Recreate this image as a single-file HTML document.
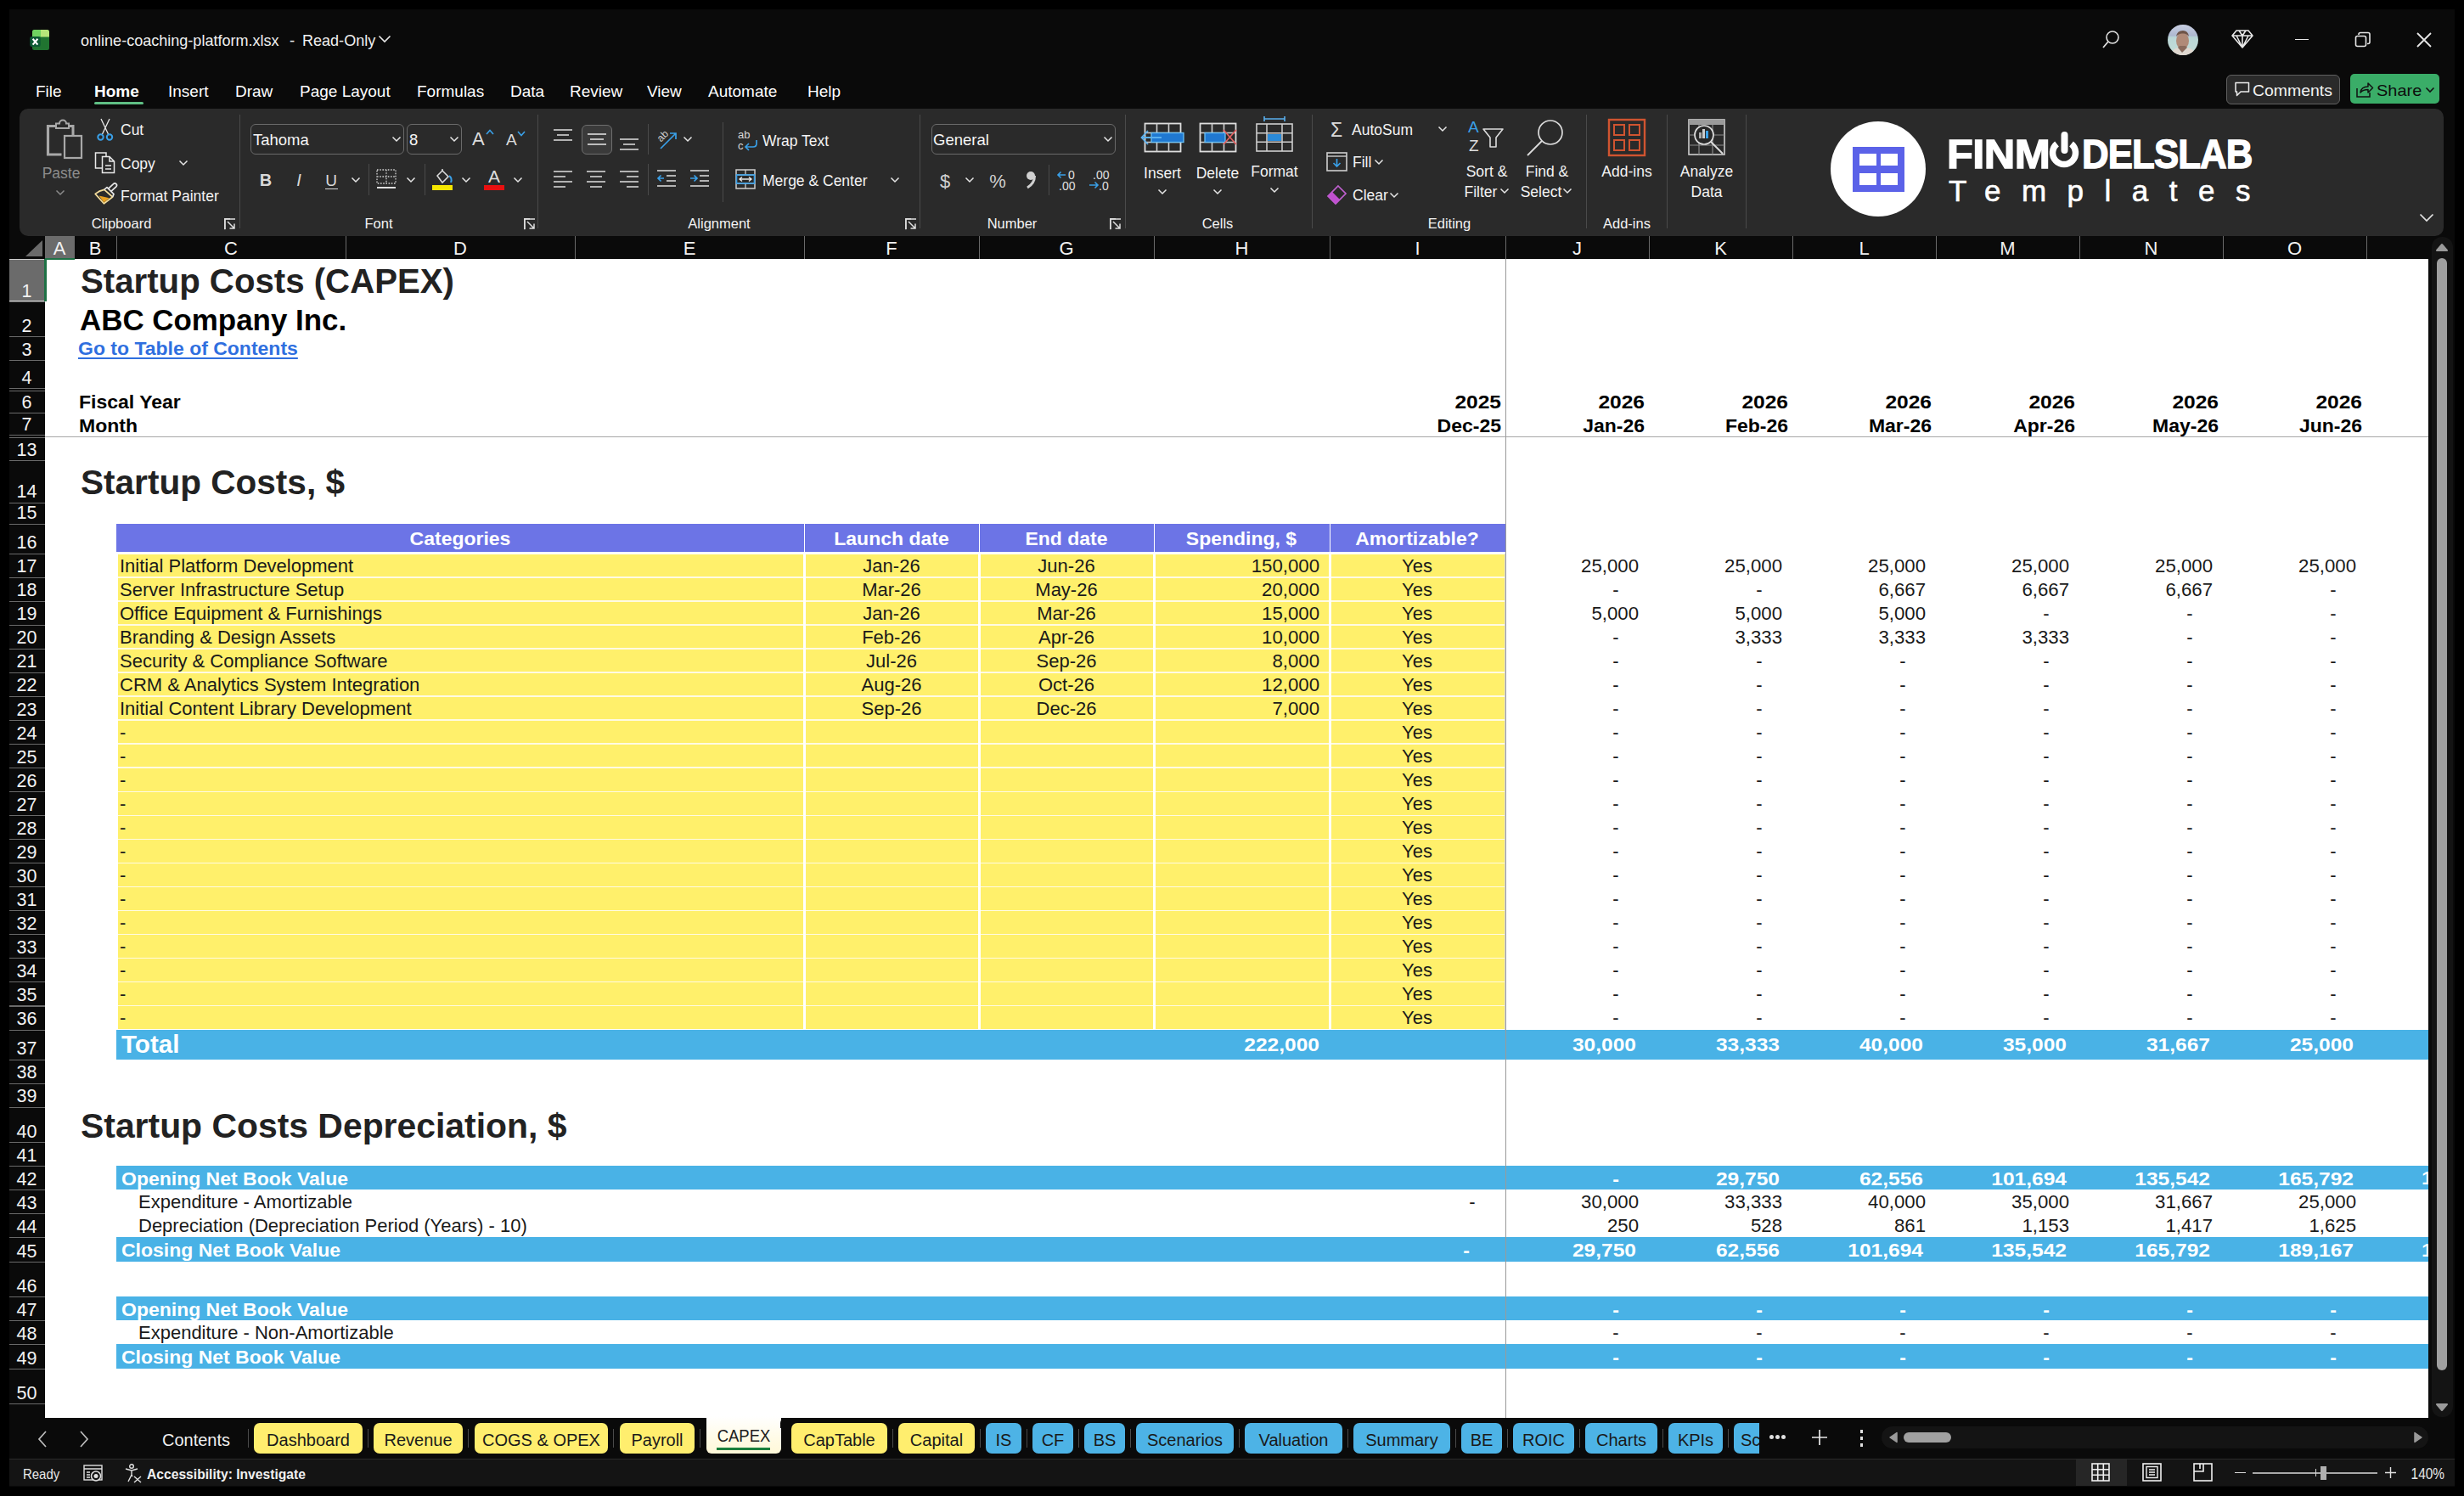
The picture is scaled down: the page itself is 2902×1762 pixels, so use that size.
<!DOCTYPE html>
<html><head><meta charset="utf-8"><title>online-coaching-platform.xlsx</title>
<style>
html,body{margin:0;padding:0;width:2902px;height:1762px;overflow:hidden;background:#000;}
body{position:relative;font-family:"Liberation Sans", sans-serif;}
.r{position:absolute;box-sizing:border-box;}
.t{position:absolute;white-space:nowrap;line-height:1;font-family:"Liberation Sans", sans-serif;}
svg.r{overflow:visible;}
</style></head><body>
<div class="r" style="left:0.00px;top:0.00px;width:2902.00px;height:1762.00px;background:#000;"></div>
<div class="r" style="left:11.00px;top:11.00px;width:2880.00px;height:1740.00px;background:#0a0a0a;"></div>
<svg class="r" style="left:34.0px;top:34.0px;" width="26" height="26" viewBox="0 0 26 26" fill="none">
<defs><clipPath id="xlc"><rect x="4" y="1" width="20" height="24" rx="2.5"/></clipPath></defs>
<g clip-path="url(#xlc)"><rect x="4" y="1" width="20" height="24" fill="#207430"/>
<rect x="4" y="1" width="10" height="8.5" fill="#6fd460"/><rect x="14" y="1" width="10" height="8.5" fill="#b6e67a"/></g>
<rect x="1.3" y="9" width="12.4" height="12" rx="2" fill="#0c5a33"/>
<path d="M4.6 11.8 L10.4 18.6 M10.4 11.8 L4.6 18.6" stroke="#fff" stroke-width="2.1"/>
</svg>
<div class="t" style="left:95.0px;top:39.00px;font-size:18.50px;font-weight:400;color:#f0f0f0;transform:scaleX(0.9750);transform-origin:left;">online-coaching-platform.xlsx</div>
<div class="t" style="left:-256.0px;top:39.00px;width:1200px;text-align:center;font-size:18.50px;font-weight:400;color:#f0f0f0;">-</div>
<div class="t" style="left:356.0px;top:39.00px;font-size:18.50px;font-weight:400;color:#f0f0f0;transform:scaleX(0.9750);transform-origin:left;">Read-Only</div>
<svg class="r" style="left:445.0px;top:41.0px;" width="16" height="10" viewBox="0 0 16 10" fill="none"><path d="M1.5 1.5 L8 8 L14.5 1.5" stroke="#e8e8e8" stroke-width="1.6"/></svg>
<svg class="r" style="left:2475.0px;top:35.0px;" width="22" height="24" viewBox="0 0 22 24" fill="none"><circle cx="13" cy="9" r="7" stroke="#e0e0e0" stroke-width="1.6"/><path d="M8 14 L2 21" stroke="#e0e0e0" stroke-width="1.8"/></svg>
<svg class="r" style="left:2553.0px;top:29.0px;" width="36" height="36" viewBox="0 0 36 36" fill="none"><defs><clipPath id="av"><circle cx="18" cy="18" r="18"/></clipPath>
<linearGradient id="avbg" x1="0" y1="0" x2="0" y2="1"><stop offset="0" stop-color="#c9cfe2"/><stop offset="0.35" stop-color="#aeb8d0"/><stop offset="0.42" stop-color="#b9d6d6"/><stop offset="1" stop-color="#c4ddd8"/></linearGradient></defs>
<g clip-path="url(#av)"><rect width="36" height="36" fill="url(#avbg)"/>
<ellipse cx="17.5" cy="19" rx="7.5" ry="10" fill="#b08a78"/><path d="M10 14 Q11 7 18 7 Q24 7 25 14 Q22 10 18 10.5 Q13 10 10 14Z" fill="#6e5448"/>
<path d="M3 37 Q6 28 12 27 L17 33 L23 27 Q31 28 34 37Z" fill="#e0d8d0"/><path d="M12 27 L17 33 L23 27 L21 25 H14Z" fill="#8a6a5c"/></g></svg>
<svg class="r" style="left:2628.0px;top:34.0px;" width="26" height="24" viewBox="0 0 26 24" fill="none"><path d="M6 2 H20 L25 8 L13 22 L1 8 Z M1 8 H25 M9 2 L13 8 L17 2 M13 8 V22 M6 8 L13 22 M20 8 L13 22" stroke="#e8e8e8" stroke-width="1.6" stroke-linejoin="round"/></svg>
<div class="r" style="left:2703.00px;top:45.50px;width:16.00px;height:1.50px;background:#e8e8e8;"></div>
<svg class="r" style="left:2773.0px;top:37.0px;" width="20" height="20" viewBox="0 0 20 20" fill="none"><rect x="1.5" y="5.5" width="12" height="12" rx="2" stroke="#e8e8e8" stroke-width="1.6"/><path d="M5 4 V3.5 A2 2 0 0 1 7 1.5 H16 A2 2 0 0 1 18 3.5 V12.5 A2 2 0 0 1 16 14.5 H15" stroke="#e8e8e8" stroke-width="1.6"/></svg>
<svg class="r" style="left:2845.0px;top:37.0px;" width="20" height="20" viewBox="0 0 20 20" fill="none"><path d="M2 2 L18 18 M18 2 L2 18" stroke="#e8e8e8" stroke-width="1.8"/></svg>
<div class="t" style="left:42.0px;top:98.00px;font-size:19.00px;font-weight:400;color:#ffffff;">File</div>
<div class="t" style="left:111.0px;top:98.00px;font-size:19.00px;font-weight:700;color:#ffffff;">Home</div>
<div class="t" style="left:198.0px;top:98.00px;font-size:19.00px;font-weight:400;color:#ffffff;">Insert</div>
<div class="t" style="left:277.0px;top:98.00px;font-size:19.00px;font-weight:400;color:#ffffff;">Draw</div>
<div class="t" style="left:353.0px;top:98.00px;font-size:19.00px;font-weight:400;color:#ffffff;">Page Layout</div>
<div class="t" style="left:491.0px;top:98.00px;font-size:19.00px;font-weight:400;color:#ffffff;">Formulas</div>
<div class="t" style="left:601.0px;top:98.00px;font-size:19.00px;font-weight:400;color:#ffffff;">Data</div>
<div class="t" style="left:671.0px;top:98.00px;font-size:19.00px;font-weight:400;color:#ffffff;">Review</div>
<div class="t" style="left:762.0px;top:98.00px;font-size:19.00px;font-weight:400;color:#ffffff;">View</div>
<div class="t" style="left:834.0px;top:98.00px;font-size:19.00px;font-weight:400;color:#ffffff;">Automate</div>
<div class="t" style="left:951.0px;top:98.00px;font-size:19.00px;font-weight:400;color:#ffffff;">Help</div>
<div class="r" style="left:111px;top:119.5px;width:58px;height:3.5px;border-radius:2px;background:#5fbf84"></div>
<div class="r" style="left:2621.5px;top:87.5px;width:134px;height:35px;border:1.3px solid #606060;border-radius:6px;background:#2a2a2a;box-sizing:border-box"></div>
<svg class="r" style="left:2631.0px;top:96.0px;" width="20" height="19" viewBox="0 0 20 19" fill="none"><path d="M2 1.5 H17.5 V12 H8 L3.5 16.5 V12 H2 Z" stroke="#eee" stroke-width="1.5" stroke-linejoin="round"/></svg>
<div class="t" style="left:2653.0px;top:98.00px;font-size:18.50px;font-weight:400;color:#f2f2f2;transform:scaleX(1.0500);transform-origin:left;">Comments</div>
<div class="r" style="left:2768px;top:87px;width:105px;height:35px;border-radius:5px;background:#3aad68"></div>
<svg class="r" style="left:2774.0px;top:96.0px;" width="22" height="20" viewBox="0 0 22 20" fill="none"><path d="M2 8 V18 H17 V13" stroke="#111" stroke-width="1.5"/><path d="M6 13 Q7 6 15 6 V2 L20.5 7.5 L15 13 V9.5 Q9 9.5 6 13Z" stroke="#111" stroke-width="1.5" stroke-linejoin="round"/></svg>
<div class="t" style="left:2799.0px;top:97.00px;font-size:19.00px;font-weight:400;color:#0d0d0d;transform:scaleX(1.0500);transform-origin:left;">Share</div>
<svg class="r" style="left:2856.0px;top:102.0px;" width="12" height="8" viewBox="0 0 12 8" fill="none"><path d="M1.5 1.5 L6 6 L10.5 1.5" stroke="#111" stroke-width="1.6"/></svg>
<div class="r" style="left:23px;top:128px;width:2855px;height:149.5px;border-radius:10px;background:#2a2a2a"></div>
<svg class="r" style="left:53.0px;top:139.0px;" width="46" height="49" viewBox="0 0 46 49" fill="none">
<path d="M4 9.5 H12 M28 9.5 H33 V21" stroke="#a8a8a8" stroke-width="3" fill="none"/>
<path d="M3.5 8 V43 H19.5" stroke="#a8a8a8" stroke-width="3.2" fill="none"/>
<path d="M13 6.5 H17 A4 4 0 0 1 25 6.5 H28 V12 H13 Z" stroke="#a8a8a8" stroke-width="2" fill="none"/>
<rect x="23" y="21" width="20" height="26" stroke="#a8a8a8" stroke-width="2.2" fill="none"/>
</svg>
<div class="t" style="left:-528.0px;top:196.00px;width:1200px;text-align:center;font-size:17.50px;font-weight:400;color:#8c8c8c;">Paste</div>
<svg class="r" style="left:65.0px;top:223.0px;" width="12" height="8" viewBox="0 0 12 8" fill="none"><path d="M1.5 1.5 L6 6 L10.5 1.5" stroke="#8a8a8a" stroke-width="1.5"/></svg>
<svg class="r" style="left:113.0px;top:139.0px;" width="22" height="28" viewBox="0 0 22 28" fill="none"><path d="M6 1 L15 20 M16 1 L7 20" stroke="#e8e8e8" stroke-width="1.3"/>
<circle cx="5.5" cy="22.5" r="3.2" stroke="#3aa0e8" stroke-width="2" fill="none"/><circle cx="16" cy="22.5" r="3.2" stroke="#3aa0e8" stroke-width="2" fill="none"/></svg>
<div class="t" style="left:142.0px;top:145.00px;font-size:17.50px;font-weight:400;color:#f3f3f3;">Cut</div>
<svg class="r" style="left:111.0px;top:178.0px;" width="26" height="27" viewBox="0 0 26 27" fill="none"><path d="M14 6 V2 H1.5 V20 H9" stroke="#e8e8e8" stroke-width="1.5" fill="none"/>
<path d="M9.5 6.5 H18 L23.5 12 V25.5 H9.5 Z M18 6.5 V12 H23.5" stroke="#e8e8e8" stroke-width="1.5" fill="none"/>
<path d="M13 17 H20 M13 21 H20" stroke="#e8e8e8" stroke-width="1.4"/></svg>
<div class="t" style="left:142.0px;top:185.00px;font-size:17.50px;font-weight:400;color:#f3f3f3;">Copy</div>
<svg class="r" style="left:210.0px;top:188.0px;" width="12" height="8" viewBox="0 0 12 8" fill="none"><path d="M1.5 1.5 L6 6 L10.5 1.5" stroke="#e6e6e6" stroke-width="1.5"/></svg>
<svg class="r" style="left:105.0px;top:210.0px;" width="36" height="36" viewBox="0 0 36 36" fill="none"><path d="M7.2 18.4 Q12 14.5 17.8 13.4 L27.6 22 L17.4 29.8 Z" stroke="#f3dc9a" stroke-width="1.7" fill="none" stroke-linejoin="round"/>
<path d="M11.5 20.5 L23.8 23.2 L17.4 28.4 Z" fill="#e8a020"/>
<path d="M17.8 13.4 L21 10.6 L29 18.6 L27.6 22" stroke="#e6e6e6" stroke-width="1.7" fill="none" stroke-linejoin="round"/>
<path d="M22.6 12.2 L28.6 6.6 A2.2 2.2 0 0 1 31.8 9.8 L25.8 15.4" stroke="#e6e6e6" stroke-width="1.7" fill="none"/></svg>
<div class="t" style="left:142.0px;top:223.00px;font-size:17.50px;font-weight:400;color:#f3f3f3;">Format Painter</div>
<div class="t" style="left:-457.0px;top:255.00px;width:1200px;text-align:center;font-size:16.50px;font-weight:400;color:#f3f3f3;">Clipboard</div>
<svg class="r" style="left:264.0px;top:257.0px;" width="14" height="14" viewBox="0 0 14 14" fill="none"><path d="M1 13 V1 H13" stroke="#e0e0e0" stroke-width="1.4" fill="none"/><path d="M1 1 V13 H13 V7" stroke="none"/><path d="M4 4 L12 12 M12 6.5 V12 H6.5" stroke="#e0e0e0" stroke-width="1.5"/></svg>
<svg class="r" style="left:264.0px;top:257.0px;" width="14" height="14" viewBox="0 0 14 14" fill="none"><path d="M0.8 13.2 V0.8 H7" stroke="#e0e0e0" stroke-width="1.4"/></svg>
<div class="r" style="left:282.00px;top:135.00px;width:1.20px;height:134.00px;background:#4a4a4a;"></div>
<div class="r" style="left:295px;top:146px;width:181px;height:36px;border:1.3px solid #6a6a6a;border-radius:6px;box-sizing:border-box"></div>
<div class="t" style="left:298.0px;top:156.00px;font-size:18.50px;font-weight:400;color:#f5f5f5;">Tahoma</div>
<svg class="r" style="left:461.0px;top:160.0px;" width="12" height="8" viewBox="0 0 12 8" fill="none"><path d="M1.5 1.5 L6 6 L10.5 1.5" stroke="#e6e6e6" stroke-width="1.5"/></svg>
<div class="r" style="left:479px;top:146px;width:65px;height:36px;border:1.3px solid #6a6a6a;border-radius:6px;box-sizing:border-box"></div>
<div class="t" style="left:482.0px;top:156.00px;font-size:18.50px;font-weight:400;color:#f5f5f5;">8</div>
<svg class="r" style="left:529.0px;top:160.0px;" width="12" height="8" viewBox="0 0 12 8" fill="none"><path d="M1.5 1.5 L6 6 L10.5 1.5" stroke="#e6e6e6" stroke-width="1.5"/></svg>
<div class="t" style="left:556.0px;top:153.00px;font-size:22.00px;font-weight:400;color:#dcdcdc;">A</div>
<svg class="r" style="left:572.0px;top:152.0px;" width="10" height="7" viewBox="0 0 10 7" fill="none"><path d="M1 6 L5 1.5 L9 6" stroke="#3aa0e8" stroke-width="1.6"/></svg>
<div class="t" style="left:596.0px;top:155.00px;font-size:19.00px;font-weight:400;color:#dcdcdc;">A</div>
<svg class="r" style="left:609.0px;top:154.0px;" width="10" height="7" viewBox="0 0 10 7" fill="none"><path d="M1 1 L5 5.5 L9 1" stroke="#3aa0e8" stroke-width="1.6"/></svg>
<div class="t" style="left:-287.0px;top:202.00px;width:1200px;text-align:center;font-size:20.00px;font-weight:700;color:#d8d8d8;">B</div>
<div class="t" style="left:-248.0px;top:202.00px;width:1200px;text-align:center;font-size:20.00px;font-weight:400;color:#d8d8d8;font-family:"Liberation Serif",serif;"><i>I</i></div>
<div class="t" style="left:-210.0px;top:203.00px;width:1200px;text-align:center;font-size:19.00px;font-weight:400;color:#d8d8d8;">U</div>
<div class="r" style="left:383.00px;top:221.50px;width:15.00px;height:1.50px;background:#d8d8d8;"></div>
<svg class="r" style="left:413.0px;top:208.0px;" width="12" height="8" viewBox="0 0 12 8" fill="none"><path d="M1.5 1.5 L6 6 L10.5 1.5" stroke="#e6e6e6" stroke-width="1.5"/></svg>
<div class="r" style="left:434.00px;top:193.00px;width:1.20px;height:37.00px;background:#4a4a4a;"></div>
<svg class="r" style="left:443.0px;top:199.0px;" width="24" height="24" viewBox="0 0 24 24" fill="none"><path d="M1 1 H23 V17 H1 Z M12 1 V17 M1 9 H23" stroke="#cfcfcf" stroke-width="1.3" stroke-dasharray="1.6 1.6"/><path d="M1 22 H23" stroke="#e0e0e0" stroke-width="2"/></svg>
<svg class="r" style="left:478.0px;top:208.0px;" width="12" height="8" viewBox="0 0 12 8" fill="none"><path d="M1.5 1.5 L6 6 L10.5 1.5" stroke="#e6e6e6" stroke-width="1.5"/></svg>
<div class="r" style="left:500.00px;top:193.00px;width:1.20px;height:37.00px;background:#4a4a4a;"></div>
<svg class="r" style="left:509.0px;top:198.0px;" width="26" height="20" viewBox="0 0 26 20" fill="none"><path d="M6 9 L12 3 L19 10 L12 17 Z" stroke="#dcdcdc" stroke-width="1.5" fill="none"/><path d="M12 3 V1" stroke="#dcdcdc" stroke-width="1.5"/><path d="M20 9 Q24 12 22 17" stroke="#3aa0e8" stroke-width="2"/></svg>
<div class="r" style="left:509.00px;top:218.00px;width:24.00px;height:6.00px;background:#f5e600;"></div>
<svg class="r" style="left:543.0px;top:208.0px;" width="12" height="8" viewBox="0 0 12 8" fill="none"><path d="M1.5 1.5 L6 6 L10.5 1.5" stroke="#e6e6e6" stroke-width="1.5"/></svg>
<div class="t" style="left:-18.0px;top:197.00px;width:1200px;text-align:center;font-size:21.00px;font-weight:400;color:#dcdcdc;">A</div>
<div class="r" style="left:570.00px;top:218.00px;width:24.00px;height:6.00px;background:#e81010;"></div>
<svg class="r" style="left:604.0px;top:208.0px;" width="12" height="8" viewBox="0 0 12 8" fill="none"><path d="M1.5 1.5 L6 6 L10.5 1.5" stroke="#e6e6e6" stroke-width="1.5"/></svg>
<div class="t" style="left:-154.0px;top:255.00px;width:1200px;text-align:center;font-size:16.50px;font-weight:400;color:#f3f3f3;">Font</div>
<svg class="r" style="left:617.0px;top:257.0px;" width="14" height="14" viewBox="0 0 14 14" fill="none"><path d="M1 13 V1 H13" stroke="#e0e0e0" stroke-width="1.4" fill="none"/><path d="M1 1 V13 H13 V7" stroke="none"/><path d="M4 4 L12 12 M12 6.5 V12 H6.5" stroke="#e0e0e0" stroke-width="1.5"/></svg>
<svg class="r" style="left:617.0px;top:257.0px;" width="14" height="14" viewBox="0 0 14 14" fill="none"><path d="M0.8 13.2 V0.8 H7" stroke="#e0e0e0" stroke-width="1.4"/></svg>
<div class="r" style="left:633.00px;top:135.00px;width:1.20px;height:134.00px;background:#4a4a4a;"></div>
<svg class="r" style="left:651.0px;top:151.0px;" width="26" height="20" viewBox="0 0 26 20" fill="none"><path d="M1 2 H23 M5 8 H19 M1 14 H23" stroke="#e0e0e0" stroke-width="1.6"/></svg>
<div class="r" style="left:685px;top:146.5px;width:36px;height:35px;border:1.3px solid #6e6e6e;border-radius:6px;background:#3a3a3a;box-sizing:border-box"></div>
<svg class="r" style="left:691.0px;top:155.5px;" width="24" height="20" viewBox="0 0 24 20" fill="none"><path d="M1 2 H23 M4 8 H20 M1 14 H23" stroke="#e8e8e8" stroke-width="1.6"/></svg>
<svg class="r" style="left:729.0px;top:160.5px;" width="26" height="20" viewBox="0 0 26 20" fill="none"><path d="M1 3 H23 M5 9 H19 M1 15 H23" stroke="#e0e0e0" stroke-width="1.6"/></svg>
<div class="r" style="left:763.00px;top:146.00px;width:1.20px;height:36.00px;background:#4a4a4a;"></div>
<svg class="r" style="left:772.0px;top:150.0px;" width="28" height="28" viewBox="0 0 28 28" fill="none"><text x="3" y="15" font-family="Liberation Sans" font-size="12" fill="#d0d0d0" transform="rotate(-45 8 12)">ab</text><path d="M6 25 L24 7 M17 7 H24 V14" stroke="#3aa0e8" stroke-width="1.7"/></svg>
<svg class="r" style="left:804.0px;top:160.0px;" width="12" height="8" viewBox="0 0 12 8" fill="none"><path d="M1.5 1.5 L6 6 L10.5 1.5" stroke="#e6e6e6" stroke-width="1.5"/></svg>
<div class="r" style="left:851.00px;top:144.00px;width:1.20px;height:94.00px;background:#4a4a4a;"></div>
<svg class="r" style="left:868.0px;top:151.0px;" width="26" height="28" viewBox="0 0 26 28" fill="none"><text x="1" y="12" font-family="Liberation Sans" font-size="13" fill="#d8d8d8">ab</text><text x="1" y="25" font-family="Liberation Sans" font-size="13" fill="#d8d8d8">c</text><path d="M23 14 V18 Q23 22 19 22 H11 M14 18 L10 22 L14 26" stroke="#3aa0e8" stroke-width="1.7" fill="none"/></svg>
<div class="t" style="left:898.0px;top:158.00px;font-size:17.50px;font-weight:400;color:#f3f3f3;">Wrap Text</div>
<svg class="r" style="left:651.0px;top:199.0px;" width="26" height="26" viewBox="0 0 26 26" fill="none"><path d="M1 3 H23 M1 9 H15 M1 15 H23 M1 21 H15" stroke="#e0e0e0" stroke-width="1.6"/></svg>
<svg class="r" style="left:690.0px;top:199.0px;" width="26" height="26" viewBox="0 0 26 26" fill="none"><path d="M1 3 H23 M5 9 H19 M1 15 H23 M5 21 H19" stroke="#e0e0e0" stroke-width="1.6"/></svg>
<svg class="r" style="left:729.0px;top:199.0px;" width="26" height="26" viewBox="0 0 26 26" fill="none"><path d="M1 3 H23 M9 9 H23 M1 15 H23 M9 21 H23" stroke="#e0e0e0" stroke-width="1.6"/></svg>
<div class="r" style="left:763.00px;top:193.00px;width:1.20px;height:37.00px;background:#4a4a4a;"></div>
<svg class="r" style="left:773.0px;top:198.0px;" width="26" height="26" viewBox="0 0 26 26" fill="none"><path d="M1 3 H23 M12 9 H23 M12 15 H23 M1 21 H23" stroke="#e0e0e0" stroke-width="1.6"/><path d="M9 12 H2 M5.5 8.5 L2 12 L5.5 15.5" stroke="#3aa0e8" stroke-width="1.7" fill="none"/></svg>
<svg class="r" style="left:812.0px;top:198.0px;" width="26" height="26" viewBox="0 0 26 26" fill="none"><path d="M1 3 H23 M12 9 H23 M12 15 H23 M1 21 H23" stroke="#e0e0e0" stroke-width="1.6"/><path d="M1 12 H9 M5.5 8.5 L9 12 L5.5 15.5" stroke="#3aa0e8" stroke-width="1.7" fill="none"/></svg>
<svg class="r" style="left:866.0px;top:199.0px;" width="25" height="25" viewBox="0 0 25 25" fill="none"><rect x="1" y="1" width="22" height="22" stroke="#cfcfcf" stroke-width="1.5" fill="none"/><path d="M1 7 H23 M1 17 H23 M12 1 V7 M12 17 V23" stroke="#cfcfcf" stroke-width="1.3"/><rect x="1.5" y="7" width="21" height="10" fill="none" stroke="#3aa0e8" stroke-width="1.6"/><path d="M5 12 H19 M8 9.5 L5 12 L8 14.5 M16 9.5 L19 12 L16 14.5" stroke="#e8e8e8" stroke-width="1.4" fill="none"/></svg>
<div class="t" style="left:898.0px;top:205.00px;font-size:17.50px;font-weight:400;color:#f3f3f3;">Merge &amp; Center</div>
<svg class="r" style="left:1048.0px;top:208.0px;" width="12" height="8" viewBox="0 0 12 8" fill="none"><path d="M1.5 1.5 L6 6 L10.5 1.5" stroke="#e6e6e6" stroke-width="1.5"/></svg>
<div class="t" style="left:247.0px;top:255.00px;width:1200px;text-align:center;font-size:16.50px;font-weight:400;color:#f3f3f3;">Alignment</div>
<svg class="r" style="left:1066.0px;top:257.0px;" width="14" height="14" viewBox="0 0 14 14" fill="none"><path d="M1 13 V1 H13" stroke="#e0e0e0" stroke-width="1.4" fill="none"/><path d="M1 1 V13 H13 V7" stroke="none"/><path d="M4 4 L12 12 M12 6.5 V12 H6.5" stroke="#e0e0e0" stroke-width="1.5"/></svg>
<svg class="r" style="left:1066.0px;top:257.0px;" width="14" height="14" viewBox="0 0 14 14" fill="none"><path d="M0.8 13.2 V0.8 H7" stroke="#e0e0e0" stroke-width="1.4"/></svg>
<div class="r" style="left:1083.00px;top:135.00px;width:1.20px;height:134.00px;background:#4a4a4a;"></div>
<div class="r" style="left:1097px;top:146px;width:217px;height:36px;border:1.3px solid #6a6a6a;border-radius:6px;box-sizing:border-box"></div>
<div class="t" style="left:1099.0px;top:156.00px;font-size:18.50px;font-weight:400;color:#f5f5f5;">General</div>
<svg class="r" style="left:1299.0px;top:160.0px;" width="12" height="8" viewBox="0 0 12 8" fill="none"><path d="M1.5 1.5 L6 6 L10.5 1.5" stroke="#e6e6e6" stroke-width="1.5"/></svg>
<div class="t" style="left:513.0px;top:203.00px;width:1200px;text-align:center;font-size:22.00px;font-weight:400;color:#d0d0d0;">$</div>
<svg class="r" style="left:1136.0px;top:208.0px;" width="12" height="8" viewBox="0 0 12 8" fill="none"><path d="M1.5 1.5 L6 6 L10.5 1.5" stroke="#e6e6e6" stroke-width="1.5"/></svg>
<div class="t" style="left:575.0px;top:203.00px;width:1200px;text-align:center;font-size:22.00px;font-weight:400;color:#d0d0d0;">%</div>
<svg class="r" style="left:1207.0px;top:201.0px;" width="14" height="22" viewBox="0 0 14 22" fill="none"><circle cx="7" cy="6" r="5" fill="#d0d0d0"/><path d="M11.5 6 Q11.5 15 3 20" stroke="#d0d0d0" stroke-width="3" fill="none"/></svg>
<div class="r" style="left:1235.00px;top:194.00px;width:1.20px;height:36.00px;background:#4a4a4a;"></div>
<svg class="r" style="left:1244.0px;top:198.0px;" width="28" height="28" viewBox="0 0 28 28" fill="none"><path d="M11 8 H2 M5.5 4.5 L2 8 L5.5 11.5" stroke="#3aa0e8" stroke-width="1.6" fill="none"/><text x="14" y="13" font-family="Liberation Sans" font-size="14" fill="#e0e0e0">0</text><text x="3" y="26" font-family="Liberation Sans" font-size="14" fill="#e0e0e0">.00</text></svg>
<svg class="r" style="left:1282.0px;top:198.0px;" width="30" height="28" viewBox="0 0 30 28" fill="none"><text x="5" y="13" font-family="Liberation Sans" font-size="14" fill="#e0e0e0">.00</text><path d="M1 20 H11 M7.5 16.5 L11 20 L7.5 23.5" stroke="#3aa0e8" stroke-width="1.6" fill="none"/><text x="12" y="26" font-family="Liberation Sans" font-size="14" fill="#e0e0e0">.0</text></svg>
<div class="t" style="left:592.0px;top:255.00px;width:1200px;text-align:center;font-size:16.50px;font-weight:400;color:#f3f3f3;">Number</div>
<svg class="r" style="left:1307.0px;top:257.0px;" width="14" height="14" viewBox="0 0 14 14" fill="none"><path d="M1 13 V1 H13" stroke="#e0e0e0" stroke-width="1.4" fill="none"/><path d="M1 1 V13 H13 V7" stroke="none"/><path d="M4 4 L12 12 M12 6.5 V12 H6.5" stroke="#e0e0e0" stroke-width="1.5"/></svg>
<svg class="r" style="left:1307.0px;top:257.0px;" width="14" height="14" viewBox="0 0 14 14" fill="none"><path d="M0.8 13.2 V0.8 H7" stroke="#e0e0e0" stroke-width="1.4"/></svg>
<div class="r" style="left:1325.00px;top:135.00px;width:1.20px;height:134.00px;background:#4a4a4a;"></div>
<svg class="r" style="left:1342.0px;top:132.0px;" width="50" height="48" viewBox="0 0 50 48" fill="none"><rect x="6.5" y="13.5" width="42" height="33" stroke="#dedede" stroke-width="1.8" fill="none"/><path d="M20.5 13.5 V46.5 M34.5 13.5 V46.5 M6.5 24.5 H48.5 M6.5 35.5 H48.5" stroke="#cfcfcf" stroke-width="1.6"/><rect x="14" y="24.5" width="38" height="11" fill="#1f78d1" stroke="#6cc0f5" stroke-width="1.3"/><path d="M26 30 H3 M10 22 L2.5 30 L10 38" stroke="#5ab0ee" stroke-width="1.8" fill="none"/></svg>
<div class="t" style="left:769.0px;top:196.00px;width:1200px;text-align:center;font-size:17.50px;font-weight:400;color:#f3f3f3;">Insert</div>
<svg class="r" style="left:1363.0px;top:222.0px;" width="12" height="8" viewBox="0 0 12 8" fill="none"><path d="M1.5 1.5 L6 6 L10.5 1.5" stroke="#e6e6e6" stroke-width="1.5"/></svg>
<svg class="r" style="left:1411.0px;top:132.0px;" width="50" height="48" viewBox="0 0 50 48" fill="none"><rect x="2.5" y="13.5" width="42" height="33" stroke="#dedede" stroke-width="1.8" fill="none"/><path d="M16.5 13.5 V46.5 M30.5 13.5 V46.5 M2.5 24.5 H44.5 M2.5 35.5 H44.5" stroke="#cfcfcf" stroke-width="1.6"/><rect x="8" y="24.5" width="24" height="11" fill="#1f78d1" stroke="#6cc0f5" stroke-width="1.3"/><path d="M30 21 L45 38 M45 21 L30 38" stroke="#e06060" stroke-width="1.8"/></svg>
<div class="t" style="left:834.0px;top:196.00px;width:1200px;text-align:center;font-size:17.50px;font-weight:400;color:#f3f3f3;">Delete</div>
<svg class="r" style="left:1428.0px;top:222.0px;" width="12" height="8" viewBox="0 0 12 8" fill="none"><path d="M1.5 1.5 L6 6 L10.5 1.5" stroke="#e6e6e6" stroke-width="1.5"/></svg>
<svg class="r" style="left:1478.0px;top:132.0px;" width="46" height="48" viewBox="0 0 46 48" fill="none"><rect x="2" y="14" width="42" height="32" stroke="#cfcfcf" stroke-width="1.6" fill="none"/><path d="M14 14 V46 M32 14 V46 M2 24.7 H44 M2 35.3 H44" stroke="#cfcfcf" stroke-width="1.5"/><rect x="15" y="26" width="16" height="8" fill="#2a8ad8"/><path d="M11 8 H35 M11 5 V11 M35 5 V11" stroke="#5ab0ee" stroke-width="1.6"/></svg>
<div class="t" style="left:901.0px;top:194.00px;width:1200px;text-align:center;font-size:17.50px;font-weight:400;color:#f3f3f3;">Format</div>
<svg class="r" style="left:1495.0px;top:220.0px;" width="12" height="8" viewBox="0 0 12 8" fill="none"><path d="M1.5 1.5 L6 6 L10.5 1.5" stroke="#e6e6e6" stroke-width="1.5"/></svg>
<div class="t" style="left:834.0px;top:255.00px;width:1200px;text-align:center;font-size:16.50px;font-weight:400;color:#f3f3f3;">Cells</div>
<div class="r" style="left:1545.00px;top:135.00px;width:1.20px;height:134.00px;background:#4a4a4a;"></div>
<div class="t" style="left:974.0px;top:142.00px;width:1200px;text-align:center;font-size:23.00px;font-weight:400;color:#dcdcdc;">&Sigma;</div>
<div class="t" style="left:1592.0px;top:145.00px;font-size:17.50px;font-weight:400;color:#f3f3f3;">AutoSum</div>
<svg class="r" style="left:1693.0px;top:148.0px;" width="12" height="8" viewBox="0 0 12 8" fill="none"><path d="M1.5 1.5 L6 6 L10.5 1.5" stroke="#e6e6e6" stroke-width="1.5"/></svg>
<svg class="r" style="left:1562.0px;top:179.0px;" width="26" height="24" viewBox="0 0 26 24" fill="none"><rect x="1" y="1" width="23" height="21" stroke="#cfcfcf" stroke-width="1.6" fill="none"/><path d="M1 5 H24" stroke="#cfcfcf" stroke-width="1.4"/><path d="M12.5 8 V17 M8.5 13 L12.5 17 L16.5 13" stroke="#3aa0e8" stroke-width="1.7" fill="none"/></svg>
<div class="t" style="left:1593.0px;top:183.00px;font-size:17.50px;font-weight:400;color:#f3f3f3;">Fill</div>
<svg class="r" style="left:1618.0px;top:187.0px;" width="12" height="8" viewBox="0 0 12 8" fill="none"><path d="M1.5 1.5 L6 6 L10.5 1.5" stroke="#e6e6e6" stroke-width="1.5"/></svg>
<svg class="r" style="left:1562.0px;top:217.0px;" width="26" height="26" viewBox="0 0 26 26" fill="none"><path d="M14 2 L23 11 L11 23 L2 14 Z" stroke="#c060d0" stroke-width="1.7" fill="none"/><path d="M2 14 L7 9 L16 18 L11 23 Z" fill="#c050d0"/></svg>
<div class="t" style="left:1593.0px;top:222.00px;font-size:17.50px;font-weight:400;color:#f3f3f3;">Clear</div>
<svg class="r" style="left:1636.0px;top:226.0px;" width="12" height="8" viewBox="0 0 12 8" fill="none"><path d="M1.5 1.5 L6 6 L10.5 1.5" stroke="#e6e6e6" stroke-width="1.5"/></svg>
<svg class="r" style="left:1728.0px;top:140.0px;" width="46" height="44" viewBox="0 0 46 44" fill="none"><text x="1" y="16" font-family="Liberation Sans" font-size="19" fill="#3aa0e8">A</text><text x="2" y="38" font-family="Liberation Sans" font-size="19" fill="#dcdcdc">Z</text><path d="M19 12 H42 L34 22 V33 H27 V22 Z" stroke="#dcdcdc" stroke-width="1.6" fill="none" stroke-linejoin="round"/></svg>
<div class="t" style="left:1151.0px;top:194.00px;width:1200px;text-align:center;font-size:17.50px;font-weight:400;color:#f3f3f3;">Sort &amp;</div>
<div class="t" style="left:1144.0px;top:218.00px;width:1200px;text-align:center;font-size:17.50px;font-weight:400;color:#f3f3f3;">Filter</div>
<svg class="r" style="left:1766.0px;top:221.0px;" width="12" height="8" viewBox="0 0 12 8" fill="none"><path d="M1.5 1.5 L6 6 L10.5 1.5" stroke="#e6e6e6" stroke-width="1.5"/></svg>
<svg class="r" style="left:1797.0px;top:140.0px;" width="47" height="45" viewBox="0 0 47 45" fill="none"><circle cx="29" cy="16" r="14" stroke="#dcdcdc" stroke-width="1.7" fill="none"/><path d="M19 26 L2 43" stroke="#dcdcdc" stroke-width="1.8"/></svg>
<div class="t" style="left:1222.0px;top:194.00px;width:1200px;text-align:center;font-size:17.50px;font-weight:400;color:#f3f3f3;">Find &amp;</div>
<div class="t" style="left:1215.0px;top:218.00px;width:1200px;text-align:center;font-size:17.50px;font-weight:400;color:#f3f3f3;">Select</div>
<svg class="r" style="left:1840.0px;top:221.0px;" width="12" height="8" viewBox="0 0 12 8" fill="none"><path d="M1.5 1.5 L6 6 L10.5 1.5" stroke="#e6e6e6" stroke-width="1.5"/></svg>
<div class="t" style="left:1107.0px;top:255.00px;width:1200px;text-align:center;font-size:16.50px;font-weight:400;color:#f3f3f3;">Editing</div>
<div class="r" style="left:1868.00px;top:135.00px;width:1.20px;height:134.00px;background:#4a4a4a;"></div>
<svg class="r" style="left:1893.0px;top:139.0px;" width="46" height="46" viewBox="0 0 46 46" fill="none"><rect x="2" y="2" width="42" height="42" stroke="#d05430" stroke-width="2.4" fill="none"/><rect x="8" y="8" width="12" height="12" stroke="#d05430" stroke-width="2" fill="none"/><rect x="26" y="8" width="12" height="12" stroke="#d05430" stroke-width="2" fill="none"/><rect x="8" y="26" width="12" height="12" stroke="#d05430" stroke-width="2" fill="none"/><rect x="26" y="26" width="12" height="12" stroke="#d05430" stroke-width="2" fill="none"/></svg>
<div class="t" style="left:1316.0px;top:194.00px;width:1200px;text-align:center;font-size:17.50px;font-weight:400;color:#f3f3f3;">Add-ins</div>
<div class="t" style="left:1316.0px;top:255.00px;width:1200px;text-align:center;font-size:16.50px;font-weight:400;color:#f3f3f3;">Add-ins</div>
<div class="r" style="left:1963.00px;top:135.00px;width:1.20px;height:134.00px;background:#4a4a4a;"></div>
<svg class="r" style="left:1987.0px;top:139.0px;" width="46" height="46" viewBox="0 0 46 46" fill="none"><rect x="2" y="2" width="42" height="41" stroke="#cfcfcf" stroke-width="1.6" fill="none"/><rect x="2" y="2" width="42" height="6" fill="#9a9a9a"/><path d="M2 20 H44 M2 32 H44 M14 8 V43 M30 8 V43" stroke="#8a8a8a" stroke-width="1.2"/><circle cx="20" cy="20" r="11" fill="#282828" stroke="#dcdcdc" stroke-width="1.7"/><rect x="14" y="17" width="3" height="7" fill="#aaa"/><rect x="18" y="13" width="3" height="11" fill="#ccc"/><rect x="22" y="15" width="3" height="9" fill="#3aa0e8"/><path d="M28 28 L42 42" stroke="#dcdcdc" stroke-width="2"/></svg>
<div class="t" style="left:1410.0px;top:194.00px;width:1200px;text-align:center;font-size:17.50px;font-weight:400;color:#f3f3f3;">Analyze</div>
<div class="t" style="left:1410.0px;top:218.00px;width:1200px;text-align:center;font-size:17.50px;font-weight:400;color:#f3f3f3;">Data</div>
<div class="r" style="left:2056.00px;top:135.00px;width:1.20px;height:134.00px;background:#4a4a4a;"></div>
<div class="r" style="left:2156px;top:143px;width:112px;height:112px;border-radius:50%;background:#fff"></div>
<div class="r" style="left:2182.00px;top:173.00px;width:61.00px;height:53.00px;background:#5b62e8;"></div>
<div class="r" style="left:2190.00px;top:181.00px;width:20.00px;height:14.00px;background:#fff;"></div>
<div class="r" style="left:2215.00px;top:181.00px;width:20.00px;height:14.00px;background:#fff;"></div>
<div class="r" style="left:2190.00px;top:204.00px;width:20.00px;height:14.00px;background:#fff;"></div>
<div class="r" style="left:2215.00px;top:204.00px;width:20.00px;height:14.00px;background:#fff;"></div>
<div class="t" style="left:2293.0px;top:157.00px;font-size:49.00px;font-weight:700;color:#ffffff;transform:scaleX(1.0300);transform-origin:left;letter-spacing:-0.5px;-webkit-text-stroke:1.4px #fff;">FINM</div>
<svg class="r" style="left:2411.0px;top:155.0px;" width="40" height="48" viewBox="0 0 40 48" fill="none"><path d="M11.5 14.5 A13.5 13.5 0 1 0 28.5 14.5" stroke="#fff" stroke-width="7.5" fill="none"/><path d="M20.5 4 V22" stroke="#fff" stroke-width="8" stroke-linecap="round"/></svg>
<div class="t" style="left:2452.0px;top:157.00px;font-size:49.00px;font-weight:700;color:#ffffff;transform:scaleX(0.8940);transform-origin:left;letter-spacing:-1px;-webkit-text-stroke:1.4px #fff;">DELSLAB</div>
<div class="t" style="left:2295.0px;top:207.00px;font-size:35.00px;font-weight:400;color:#ffffff;letter-spacing:24.5px;-webkit-text-stroke:0.6px #fff;">Templates</div>
<svg class="r" style="left:2849.0px;top:251.0px;" width="18" height="11" viewBox="0 0 18 11" fill="none"><path d="M1.5 1.5 L9 9 L16.5 1.5" stroke="#e0e0e0" stroke-width="1.7"/></svg>
<div class="r" style="left:53.00px;top:305.00px;width:2807.00px;height:1365.00px;background:#ffffff;"></div>
<div class="r" style="left:11.00px;top:278.00px;width:2849.00px;height:27.00px;background:#0a0a0a;"></div>
<svg class="r" style="left:28.0px;top:281.0px;" width="24" height="22" viewBox="0 0 24 22" fill="none"><path d="M22 2 V21 H2 Z" fill="#6a6a6a"/></svg>
<div class="r" style="left:53.00px;top:278.00px;width:34.00px;height:27.00px;background:#6b6b6b;"></div>
<div class="r" style="left:86.80px;top:278.00px;width:1.10px;height:27.00px;background:#6a6a6a;"></div>
<div class="t" style="left:-530.0px;top:282.00px;width:1200px;text-align:center;font-size:22.00px;font-weight:400;color:#f2f2f2;">A</div>
<div class="r" style="left:136.80px;top:278.00px;width:1.10px;height:27.00px;background:#6a6a6a;"></div>
<div class="t" style="left:-488.0px;top:282.00px;width:1200px;text-align:center;font-size:22.00px;font-weight:400;color:#f2f2f2;">B</div>
<div class="r" style="left:406.80px;top:278.00px;width:1.10px;height:27.00px;background:#6a6a6a;"></div>
<div class="t" style="left:-328.0px;top:282.00px;width:1200px;text-align:center;font-size:22.00px;font-weight:400;color:#f2f2f2;">C</div>
<div class="r" style="left:676.80px;top:278.00px;width:1.10px;height:27.00px;background:#6a6a6a;"></div>
<div class="t" style="left:-58.0px;top:282.00px;width:1200px;text-align:center;font-size:22.00px;font-weight:400;color:#f2f2f2;">D</div>
<div class="r" style="left:946.80px;top:278.00px;width:1.10px;height:27.00px;background:#6a6a6a;"></div>
<div class="t" style="left:212.0px;top:282.00px;width:1200px;text-align:center;font-size:22.00px;font-weight:400;color:#f2f2f2;">E</div>
<div class="r" style="left:1152.80px;top:278.00px;width:1.10px;height:27.00px;background:#6a6a6a;"></div>
<div class="t" style="left:450.0px;top:282.00px;width:1200px;text-align:center;font-size:22.00px;font-weight:400;color:#f2f2f2;">F</div>
<div class="r" style="left:1358.80px;top:278.00px;width:1.10px;height:27.00px;background:#6a6a6a;"></div>
<div class="t" style="left:656.0px;top:282.00px;width:1200px;text-align:center;font-size:22.00px;font-weight:400;color:#f2f2f2;">G</div>
<div class="r" style="left:1565.80px;top:278.00px;width:1.10px;height:27.00px;background:#6a6a6a;"></div>
<div class="t" style="left:862.5px;top:282.00px;width:1200px;text-align:center;font-size:22.00px;font-weight:400;color:#f2f2f2;">H</div>
<div class="r" style="left:1772.80px;top:278.00px;width:1.10px;height:27.00px;background:#6a6a6a;"></div>
<div class="t" style="left:1069.5px;top:282.00px;width:1200px;text-align:center;font-size:22.00px;font-weight:400;color:#f2f2f2;">I</div>
<div class="r" style="left:1941.80px;top:278.00px;width:1.10px;height:27.00px;background:#6a6a6a;"></div>
<div class="t" style="left:1257.5px;top:282.00px;width:1200px;text-align:center;font-size:22.00px;font-weight:400;color:#f2f2f2;">J</div>
<div class="r" style="left:2110.80px;top:278.00px;width:1.10px;height:27.00px;background:#6a6a6a;"></div>
<div class="t" style="left:1426.5px;top:282.00px;width:1200px;text-align:center;font-size:22.00px;font-weight:400;color:#f2f2f2;">K</div>
<div class="r" style="left:2279.80px;top:278.00px;width:1.10px;height:27.00px;background:#6a6a6a;"></div>
<div class="t" style="left:1595.5px;top:282.00px;width:1200px;text-align:center;font-size:22.00px;font-weight:400;color:#f2f2f2;">L</div>
<div class="r" style="left:2448.80px;top:278.00px;width:1.10px;height:27.00px;background:#6a6a6a;"></div>
<div class="t" style="left:1764.5px;top:282.00px;width:1200px;text-align:center;font-size:22.00px;font-weight:400;color:#f2f2f2;">M</div>
<div class="r" style="left:2617.80px;top:278.00px;width:1.10px;height:27.00px;background:#6a6a6a;"></div>
<div class="t" style="left:1933.5px;top:282.00px;width:1200px;text-align:center;font-size:22.00px;font-weight:400;color:#f2f2f2;">N</div>
<div class="r" style="left:2786.80px;top:278.00px;width:1.10px;height:27.00px;background:#6a6a6a;"></div>
<div class="t" style="left:2102.5px;top:282.00px;width:1200px;text-align:center;font-size:22.00px;font-weight:400;color:#f2f2f2;">O</div>
<div class="r" style="left:53.00px;top:303.50px;width:35.00px;height:2.50px;background:#1e7145;"></div>
<div class="r" style="left:11.00px;top:305.00px;width:42.00px;height:1365.00px;background:#0a0a0a;"></div>
<div class="r" style="left:11.00px;top:305.00px;width:42.00px;height:50.00px;background:#6b6b6b;"></div>
<div class="r" style="left:11.00px;top:355.00px;width:42.00px;height:1.10px;background:#6a6a6a;"></div>
<div class="t" style="left:-568.5px;top:333.00px;width:1200px;text-align:center;font-size:21.50px;font-weight:400;color:#f2f2f2;">1</div>
<div class="r" style="left:11.00px;top:396.00px;width:42.00px;height:1.10px;background:#6a6a6a;"></div>
<div class="t" style="left:-568.5px;top:374.00px;width:1200px;text-align:center;font-size:21.50px;font-weight:400;color:#f2f2f2;">2</div>
<div class="r" style="left:11.00px;top:424.00px;width:42.00px;height:1.10px;background:#6a6a6a;"></div>
<div class="t" style="left:-568.5px;top:402.00px;width:1200px;text-align:center;font-size:21.50px;font-weight:400;color:#f2f2f2;">3</div>
<div class="r" style="left:11.00px;top:457.00px;width:42.00px;height:1.10px;background:#6a6a6a;"></div>
<div class="t" style="left:-568.5px;top:435.00px;width:1200px;text-align:center;font-size:21.50px;font-weight:400;color:#f2f2f2;">4</div>
<div class="r" style="left:11.00px;top:486.00px;width:42.00px;height:1.10px;background:#6a6a6a;"></div>
<div class="t" style="left:-568.5px;top:464.00px;width:1200px;text-align:center;font-size:21.50px;font-weight:400;color:#f2f2f2;">6</div>
<div class="r" style="left:11.00px;top:512.00px;width:42.00px;height:1.10px;background:#6a6a6a;"></div>
<div class="t" style="left:-568.5px;top:490.00px;width:1200px;text-align:center;font-size:21.50px;font-weight:400;color:#f2f2f2;">7</div>
<div class="r" style="left:11.00px;top:542.00px;width:42.00px;height:1.10px;background:#6a6a6a;"></div>
<div class="t" style="left:-568.5px;top:520.00px;width:1200px;text-align:center;font-size:21.50px;font-weight:400;color:#f2f2f2;">13</div>
<div class="r" style="left:11.00px;top:591.50px;width:42.00px;height:1.10px;background:#6a6a6a;"></div>
<div class="t" style="left:-568.5px;top:569.00px;width:1200px;text-align:center;font-size:21.50px;font-weight:400;color:#f2f2f2;">14</div>
<div class="r" style="left:11.00px;top:616.50px;width:42.00px;height:1.10px;background:#6a6a6a;"></div>
<div class="t" style="left:-568.5px;top:594.00px;width:1200px;text-align:center;font-size:21.50px;font-weight:400;color:#f2f2f2;">15</div>
<div class="r" style="left:11.00px;top:651.50px;width:42.00px;height:1.10px;background:#6a6a6a;"></div>
<div class="t" style="left:-568.5px;top:629.00px;width:1200px;text-align:center;font-size:21.50px;font-weight:400;color:#f2f2f2;">16</div>
<div class="r" style="left:11.00px;top:679.55px;width:42.00px;height:1.10px;background:#6a6a6a;"></div>
<div class="t" style="left:-568.5px;top:657.00px;width:1200px;text-align:center;font-size:21.50px;font-weight:400;color:#f2f2f2;">17</div>
<div class="r" style="left:11.00px;top:707.60px;width:42.00px;height:1.10px;background:#6a6a6a;"></div>
<div class="t" style="left:-568.5px;top:685.00px;width:1200px;text-align:center;font-size:21.50px;font-weight:400;color:#f2f2f2;">18</div>
<div class="r" style="left:11.00px;top:735.65px;width:42.00px;height:1.10px;background:#6a6a6a;"></div>
<div class="t" style="left:-568.5px;top:713.00px;width:1200px;text-align:center;font-size:21.50px;font-weight:400;color:#f2f2f2;">19</div>
<div class="r" style="left:11.00px;top:763.70px;width:42.00px;height:1.10px;background:#6a6a6a;"></div>
<div class="t" style="left:-568.5px;top:741.00px;width:1200px;text-align:center;font-size:21.50px;font-weight:400;color:#f2f2f2;">20</div>
<div class="r" style="left:11.00px;top:791.75px;width:42.00px;height:1.10px;background:#6a6a6a;"></div>
<div class="t" style="left:-568.5px;top:769.00px;width:1200px;text-align:center;font-size:21.50px;font-weight:400;color:#f2f2f2;">21</div>
<div class="r" style="left:11.00px;top:819.80px;width:42.00px;height:1.10px;background:#6a6a6a;"></div>
<div class="t" style="left:-568.5px;top:797.00px;width:1200px;text-align:center;font-size:21.50px;font-weight:400;color:#f2f2f2;">22</div>
<div class="r" style="left:11.00px;top:847.85px;width:42.00px;height:1.10px;background:#6a6a6a;"></div>
<div class="t" style="left:-568.5px;top:826.00px;width:1200px;text-align:center;font-size:21.50px;font-weight:400;color:#f2f2f2;">23</div>
<div class="r" style="left:11.00px;top:875.90px;width:42.00px;height:1.10px;background:#6a6a6a;"></div>
<div class="t" style="left:-568.5px;top:854.00px;width:1200px;text-align:center;font-size:21.50px;font-weight:400;color:#f2f2f2;">24</div>
<div class="r" style="left:11.00px;top:903.95px;width:42.00px;height:1.10px;background:#6a6a6a;"></div>
<div class="t" style="left:-568.5px;top:882.00px;width:1200px;text-align:center;font-size:21.50px;font-weight:400;color:#f2f2f2;">25</div>
<div class="r" style="left:11.00px;top:932.00px;width:42.00px;height:1.10px;background:#6a6a6a;"></div>
<div class="t" style="left:-568.5px;top:910.00px;width:1200px;text-align:center;font-size:21.50px;font-weight:400;color:#f2f2f2;">26</div>
<div class="r" style="left:11.00px;top:960.05px;width:42.00px;height:1.10px;background:#6a6a6a;"></div>
<div class="t" style="left:-568.5px;top:938.00px;width:1200px;text-align:center;font-size:21.50px;font-weight:400;color:#f2f2f2;">27</div>
<div class="r" style="left:11.00px;top:988.10px;width:42.00px;height:1.10px;background:#6a6a6a;"></div>
<div class="t" style="left:-568.5px;top:966.00px;width:1200px;text-align:center;font-size:21.50px;font-weight:400;color:#f2f2f2;">28</div>
<div class="r" style="left:11.00px;top:1016.15px;width:42.00px;height:1.10px;background:#6a6a6a;"></div>
<div class="t" style="left:-568.5px;top:994.00px;width:1200px;text-align:center;font-size:21.50px;font-weight:400;color:#f2f2f2;">29</div>
<div class="r" style="left:11.00px;top:1044.20px;width:42.00px;height:1.10px;background:#6a6a6a;"></div>
<div class="t" style="left:-568.5px;top:1022.00px;width:1200px;text-align:center;font-size:21.50px;font-weight:400;color:#f2f2f2;">30</div>
<div class="r" style="left:11.00px;top:1072.25px;width:42.00px;height:1.10px;background:#6a6a6a;"></div>
<div class="t" style="left:-568.5px;top:1050.00px;width:1200px;text-align:center;font-size:21.50px;font-weight:400;color:#f2f2f2;">31</div>
<div class="r" style="left:11.00px;top:1100.30px;width:42.00px;height:1.10px;background:#6a6a6a;"></div>
<div class="t" style="left:-568.5px;top:1078.00px;width:1200px;text-align:center;font-size:21.50px;font-weight:400;color:#f2f2f2;">32</div>
<div class="r" style="left:11.00px;top:1128.35px;width:42.00px;height:1.10px;background:#6a6a6a;"></div>
<div class="t" style="left:-568.5px;top:1106.00px;width:1200px;text-align:center;font-size:21.50px;font-weight:400;color:#f2f2f2;">33</div>
<div class="r" style="left:11.00px;top:1156.40px;width:42.00px;height:1.10px;background:#6a6a6a;"></div>
<div class="t" style="left:-568.5px;top:1134.00px;width:1200px;text-align:center;font-size:21.50px;font-weight:400;color:#f2f2f2;">34</div>
<div class="r" style="left:11.00px;top:1184.45px;width:42.00px;height:1.10px;background:#6a6a6a;"></div>
<div class="t" style="left:-568.5px;top:1162.00px;width:1200px;text-align:center;font-size:21.50px;font-weight:400;color:#f2f2f2;">35</div>
<div class="r" style="left:11.00px;top:1212.50px;width:42.00px;height:1.10px;background:#6a6a6a;"></div>
<div class="t" style="left:-568.5px;top:1190.00px;width:1200px;text-align:center;font-size:21.50px;font-weight:400;color:#f2f2f2;">36</div>
<div class="r" style="left:11.00px;top:1247.50px;width:42.00px;height:1.10px;background:#6a6a6a;"></div>
<div class="t" style="left:-568.5px;top:1225.00px;width:1200px;text-align:center;font-size:21.50px;font-weight:400;color:#f2f2f2;">37</div>
<div class="r" style="left:11.00px;top:1275.50px;width:42.00px;height:1.10px;background:#6a6a6a;"></div>
<div class="t" style="left:-568.5px;top:1253.00px;width:1200px;text-align:center;font-size:21.50px;font-weight:400;color:#f2f2f2;">38</div>
<div class="r" style="left:11.00px;top:1303.50px;width:42.00px;height:1.10px;background:#6a6a6a;"></div>
<div class="t" style="left:-568.5px;top:1281.00px;width:1200px;text-align:center;font-size:21.50px;font-weight:400;color:#f2f2f2;">39</div>
<div class="r" style="left:11.00px;top:1345.30px;width:42.00px;height:1.10px;background:#6a6a6a;"></div>
<div class="t" style="left:-568.5px;top:1323.00px;width:1200px;text-align:center;font-size:21.50px;font-weight:400;color:#f2f2f2;">40</div>
<div class="r" style="left:11.00px;top:1373.40px;width:42.00px;height:1.10px;background:#6a6a6a;"></div>
<div class="t" style="left:-568.5px;top:1351.00px;width:1200px;text-align:center;font-size:21.50px;font-weight:400;color:#f2f2f2;">41</div>
<div class="r" style="left:11.00px;top:1401.20px;width:42.00px;height:1.10px;background:#6a6a6a;"></div>
<div class="t" style="left:-568.5px;top:1379.00px;width:1200px;text-align:center;font-size:21.50px;font-weight:400;color:#f2f2f2;">42</div>
<div class="r" style="left:11.00px;top:1429.00px;width:42.00px;height:1.10px;background:#6a6a6a;"></div>
<div class="t" style="left:-568.5px;top:1407.00px;width:1200px;text-align:center;font-size:21.50px;font-weight:400;color:#f2f2f2;">43</div>
<div class="r" style="left:11.00px;top:1457.00px;width:42.00px;height:1.10px;background:#6a6a6a;"></div>
<div class="t" style="left:-568.5px;top:1435.00px;width:1200px;text-align:center;font-size:21.50px;font-weight:400;color:#f2f2f2;">44</div>
<div class="r" style="left:11.00px;top:1486.00px;width:42.00px;height:1.10px;background:#6a6a6a;"></div>
<div class="t" style="left:-568.5px;top:1464.00px;width:1200px;text-align:center;font-size:21.50px;font-weight:400;color:#f2f2f2;">45</div>
<div class="r" style="left:11.00px;top:1527.00px;width:42.00px;height:1.10px;background:#6a6a6a;"></div>
<div class="t" style="left:-568.5px;top:1505.00px;width:1200px;text-align:center;font-size:21.50px;font-weight:400;color:#f2f2f2;">46</div>
<div class="r" style="left:11.00px;top:1555.00px;width:42.00px;height:1.10px;background:#6a6a6a;"></div>
<div class="t" style="left:-568.5px;top:1533.00px;width:1200px;text-align:center;font-size:21.50px;font-weight:400;color:#f2f2f2;">47</div>
<div class="r" style="left:11.00px;top:1583.00px;width:42.00px;height:1.10px;background:#6a6a6a;"></div>
<div class="t" style="left:-568.5px;top:1561.00px;width:1200px;text-align:center;font-size:21.50px;font-weight:400;color:#f2f2f2;">48</div>
<div class="r" style="left:11.00px;top:1612.00px;width:42.00px;height:1.10px;background:#6a6a6a;"></div>
<div class="t" style="left:-568.5px;top:1590.00px;width:1200px;text-align:center;font-size:21.50px;font-weight:400;color:#f2f2f2;">49</div>
<div class="r" style="left:11.00px;top:1653.00px;width:42.00px;height:1.10px;background:#6a6a6a;"></div>
<div class="t" style="left:-568.5px;top:1631.00px;width:1200px;text-align:center;font-size:21.50px;font-weight:400;color:#f2f2f2;">50</div>
<div class="r" style="left:11.00px;top:1700.00px;width:42.00px;height:1.10px;background:#6a6a6a;"></div>
<div class="r" style="left:11.00px;top:457.00px;width:42.00px;height:4.00px;background:#0a0a0a;"></div>
<div class="r" style="left:11.00px;top:456.50px;width:42.00px;height:1.20px;background:#6a6a6a;"></div>
<div class="r" style="left:11.00px;top:460.00px;width:42.00px;height:1.20px;background:#6a6a6a;"></div>
<div class="r" style="left:11.00px;top:512.00px;width:42.00px;height:4.00px;background:#0a0a0a;"></div>
<div class="r" style="left:11.00px;top:511.50px;width:42.00px;height:1.20px;background:#6a6a6a;"></div>
<div class="r" style="left:11.00px;top:515.00px;width:42.00px;height:1.20px;background:#6a6a6a;"></div>
<div class="r" style="left:11.00px;top:305.00px;width:42.00px;height:1.20px;background:#d0d0d0;"></div>
<div class="r" style="left:11.00px;top:354.20px;width:42.00px;height:1.30px;background:#d0d0d0;"></div>
<div class="r" style="left:52.00px;top:305.00px;width:2.50px;height:50.00px;background:#1e7145;"></div>
<div class="t" style="left:95.0px;top:311.00px;font-size:40.00px;font-weight:700;color:#222222;transform:scaleX(1.0050);transform-origin:left;">Startup Costs (CAPEX)</div>
<div class="t" style="left:94.0px;top:360.00px;font-size:35.50px;font-weight:700;color:#000000;transform:scaleX(0.9830);transform-origin:left;">ABC Company Inc.</div>
<div class="t" style="left:92.0px;top:400.00px;font-size:22.00px;font-weight:700;color:#2f6fdf;transform:scaleX(1.0450);transform-origin:left;text-decoration-thickness:2px;text-underline-offset:3px;"><u>Go to Table of Contents</u></div>
<div class="t" style="left:93.0px;top:463.00px;font-size:22.00px;font-weight:700;color:#000;transform:scaleX(1.0450);transform-origin:left;">Fiscal Year</div>
<div class="t" style="left:93.0px;top:491.00px;font-size:22.00px;font-weight:700;color:#000;transform:scaleX(1.0450);transform-origin:left;">Month</div>
<div class="t" style="left:568.0px;top:463.00px;width:1200px;text-align:right;font-size:22.00px;font-weight:700;color:#000;transform:scaleX(1.1150);transform-origin:right;">2025</div>
<div class="t" style="left:568.0px;top:491.00px;width:1200px;text-align:right;font-size:22.00px;font-weight:700;color:#000;transform:scaleX(1.0450);transform-origin:right;">Dec-25</div>
<div class="t" style="left:737.0px;top:463.00px;width:1200px;text-align:right;font-size:22.00px;font-weight:700;color:#000;transform:scaleX(1.1150);transform-origin:right;">2026</div>
<div class="t" style="left:737.0px;top:491.00px;width:1200px;text-align:right;font-size:22.00px;font-weight:700;color:#000;transform:scaleX(1.0450);transform-origin:right;">Jan-26</div>
<div class="t" style="left:906.0px;top:463.00px;width:1200px;text-align:right;font-size:22.00px;font-weight:700;color:#000;transform:scaleX(1.1150);transform-origin:right;">2026</div>
<div class="t" style="left:906.0px;top:491.00px;width:1200px;text-align:right;font-size:22.00px;font-weight:700;color:#000;transform:scaleX(1.0450);transform-origin:right;">Feb-26</div>
<div class="t" style="left:1075.0px;top:463.00px;width:1200px;text-align:right;font-size:22.00px;font-weight:700;color:#000;transform:scaleX(1.1150);transform-origin:right;">2026</div>
<div class="t" style="left:1075.0px;top:491.00px;width:1200px;text-align:right;font-size:22.00px;font-weight:700;color:#000;transform:scaleX(1.0450);transform-origin:right;">Mar-26</div>
<div class="t" style="left:1244.0px;top:463.00px;width:1200px;text-align:right;font-size:22.00px;font-weight:700;color:#000;transform:scaleX(1.1150);transform-origin:right;">2026</div>
<div class="t" style="left:1244.0px;top:491.00px;width:1200px;text-align:right;font-size:22.00px;font-weight:700;color:#000;transform:scaleX(1.0450);transform-origin:right;">Apr-26</div>
<div class="t" style="left:1413.0px;top:463.00px;width:1200px;text-align:right;font-size:22.00px;font-weight:700;color:#000;transform:scaleX(1.1150);transform-origin:right;">2026</div>
<div class="t" style="left:1413.0px;top:491.00px;width:1200px;text-align:right;font-size:22.00px;font-weight:700;color:#000;transform:scaleX(1.0450);transform-origin:right;">May-26</div>
<div class="t" style="left:1582.0px;top:463.00px;width:1200px;text-align:right;font-size:22.00px;font-weight:700;color:#000;transform:scaleX(1.1150);transform-origin:right;">2026</div>
<div class="t" style="left:1582.0px;top:491.00px;width:1200px;text-align:right;font-size:22.00px;font-weight:700;color:#000;transform:scaleX(1.0450);transform-origin:right;">Jun-26</div>
<div class="r" style="left:53.00px;top:513.50px;width:2807.00px;height:1.30px;background:#a8a8a8;"></div>
<div class="t" style="left:95.0px;top:548.00px;font-size:40.00px;font-weight:700;color:#222222;transform:scaleX(1.0140);transform-origin:left;">Startup Costs, $</div>
<div class="r" style="left:137.00px;top:617.00px;width:1636.00px;height:32.70px;background:#6c74e6;"></div>
<div class="r" style="left:946.50px;top:617.00px;width:1.20px;height:32.70px;background:#ffffff;"></div>
<div class="r" style="left:1152.50px;top:617.00px;width:1.20px;height:32.70px;background:#ffffff;"></div>
<div class="r" style="left:1358.50px;top:617.00px;width:1.20px;height:32.70px;background:#ffffff;"></div>
<div class="r" style="left:1565.50px;top:617.00px;width:1.20px;height:32.70px;background:#ffffff;"></div>
<div class="t" style="left:-58.0px;top:624.00px;width:1200px;text-align:center;font-size:22.00px;font-weight:700;color:#fff;transform:scaleX(1.0450);transform-origin:center;">Categories</div>
<div class="t" style="left:450.0px;top:624.00px;width:1200px;text-align:center;font-size:22.00px;font-weight:700;color:#fff;transform:scaleX(1.0450);transform-origin:center;">Launch date</div>
<div class="t" style="left:656.0px;top:624.00px;width:1200px;text-align:center;font-size:22.00px;font-weight:700;color:#fff;transform:scaleX(1.0450);transform-origin:center;">End date</div>
<div class="t" style="left:862.0px;top:624.00px;width:1200px;text-align:center;font-size:22.00px;font-weight:700;color:#fff;transform:scaleX(1.0450);transform-origin:center;">Spending, $</div>
<div class="t" style="left:1069.0px;top:624.00px;width:1200px;text-align:center;font-size:22.00px;font-weight:700;color:#fff;transform:scaleX(1.0450);transform-origin:center;">Amortizable?</div>
<div class="r" style="left:139.00px;top:653.20px;width:1634.00px;height:559.30px;background:#fff06b;"></div>
<div class="r" style="left:139.00px;top:679.05px;width:1634.00px;height:1.50px;background:#fffbe2;"></div>
<div class="r" style="left:139.00px;top:707.10px;width:1634.00px;height:1.50px;background:#fffbe2;"></div>
<div class="r" style="left:139.00px;top:735.15px;width:1634.00px;height:1.50px;background:#fffbe2;"></div>
<div class="r" style="left:139.00px;top:763.20px;width:1634.00px;height:1.50px;background:#fffbe2;"></div>
<div class="r" style="left:139.00px;top:791.25px;width:1634.00px;height:1.50px;background:#fffbe2;"></div>
<div class="r" style="left:139.00px;top:819.30px;width:1634.00px;height:1.50px;background:#fffbe2;"></div>
<div class="r" style="left:139.00px;top:847.35px;width:1634.00px;height:1.50px;background:#fffbe2;"></div>
<div class="r" style="left:139.00px;top:875.40px;width:1634.00px;height:1.50px;background:#fffbe2;"></div>
<div class="r" style="left:139.00px;top:903.45px;width:1634.00px;height:1.50px;background:#fffbe2;"></div>
<div class="r" style="left:139.00px;top:931.50px;width:1634.00px;height:1.50px;background:#fffbe2;"></div>
<div class="r" style="left:139.00px;top:959.55px;width:1634.00px;height:1.50px;background:#fffbe2;"></div>
<div class="r" style="left:139.00px;top:987.60px;width:1634.00px;height:1.50px;background:#fffbe2;"></div>
<div class="r" style="left:139.00px;top:1015.65px;width:1634.00px;height:1.50px;background:#fffbe2;"></div>
<div class="r" style="left:139.00px;top:1043.70px;width:1634.00px;height:1.50px;background:#fffbe2;"></div>
<div class="r" style="left:139.00px;top:1071.75px;width:1634.00px;height:1.50px;background:#fffbe2;"></div>
<div class="r" style="left:139.00px;top:1099.80px;width:1634.00px;height:1.50px;background:#fffbe2;"></div>
<div class="r" style="left:139.00px;top:1127.85px;width:1634.00px;height:1.50px;background:#fffbe2;"></div>
<div class="r" style="left:139.00px;top:1155.90px;width:1634.00px;height:1.50px;background:#fffbe2;"></div>
<div class="r" style="left:139.00px;top:1183.95px;width:1634.00px;height:1.50px;background:#fffbe2;"></div>
<div class="r" style="left:946.00px;top:653.00px;width:3.00px;height:559.20px;background:#ffffff;"></div>
<div class="r" style="left:1152.00px;top:653.00px;width:3.00px;height:559.20px;background:#ffffff;"></div>
<div class="r" style="left:1358.00px;top:653.00px;width:3.00px;height:559.20px;background:#ffffff;"></div>
<div class="r" style="left:1565.00px;top:653.00px;width:3.00px;height:559.20px;background:#ffffff;"></div>
<div class="r" style="left:1771.80px;top:651.50px;width:1.40px;height:561.00px;background:#d8d8d8;"></div>
<div class="t" style="left:141.0px;top:656.00px;font-size:22.00px;font-weight:400;color:#1a1a1a;transform:scaleX(1.0000);transform-origin:left;">Initial Platform Development</div>
<div class="t" style="left:450.0px;top:656.00px;width:1200px;text-align:center;font-size:22.00px;font-weight:400;color:#1a1a1a;transform:scaleX(1.0000);transform-origin:center;">Jan-26</div>
<div class="t" style="left:656.0px;top:656.00px;width:1200px;text-align:center;font-size:22.00px;font-weight:400;color:#1a1a1a;transform:scaleX(1.0000);transform-origin:center;">Jun-26</div>
<div class="t" style="left:354.0px;top:656.00px;width:1200px;text-align:right;font-size:22.00px;font-weight:400;color:#1a1a1a;transform:scaleX(1.0100);transform-origin:right;">150,000</div>
<div class="t" style="left:1069.0px;top:656.00px;width:1200px;text-align:center;font-size:22.00px;font-weight:400;color:#1a1a1a;transform:scaleX(1.0000);transform-origin:center;">Yes</div>
<div class="t" style="left:141.0px;top:684.00px;font-size:22.00px;font-weight:400;color:#1a1a1a;transform:scaleX(1.0000);transform-origin:left;">Server Infrastructure Setup</div>
<div class="t" style="left:450.0px;top:684.00px;width:1200px;text-align:center;font-size:22.00px;font-weight:400;color:#1a1a1a;transform:scaleX(1.0000);transform-origin:center;">Mar-26</div>
<div class="t" style="left:656.0px;top:684.00px;width:1200px;text-align:center;font-size:22.00px;font-weight:400;color:#1a1a1a;transform:scaleX(1.0000);transform-origin:center;">May-26</div>
<div class="t" style="left:354.0px;top:684.00px;width:1200px;text-align:right;font-size:22.00px;font-weight:400;color:#1a1a1a;transform:scaleX(1.0100);transform-origin:right;">20,000</div>
<div class="t" style="left:1069.0px;top:684.00px;width:1200px;text-align:center;font-size:22.00px;font-weight:400;color:#1a1a1a;transform:scaleX(1.0000);transform-origin:center;">Yes</div>
<div class="t" style="left:141.0px;top:712.00px;font-size:22.00px;font-weight:400;color:#1a1a1a;transform:scaleX(1.0000);transform-origin:left;">Office Equipment &amp; Furnishings</div>
<div class="t" style="left:450.0px;top:712.00px;width:1200px;text-align:center;font-size:22.00px;font-weight:400;color:#1a1a1a;transform:scaleX(1.0000);transform-origin:center;">Jan-26</div>
<div class="t" style="left:656.0px;top:712.00px;width:1200px;text-align:center;font-size:22.00px;font-weight:400;color:#1a1a1a;transform:scaleX(1.0000);transform-origin:center;">Mar-26</div>
<div class="t" style="left:354.0px;top:712.00px;width:1200px;text-align:right;font-size:22.00px;font-weight:400;color:#1a1a1a;transform:scaleX(1.0100);transform-origin:right;">15,000</div>
<div class="t" style="left:1069.0px;top:712.00px;width:1200px;text-align:center;font-size:22.00px;font-weight:400;color:#1a1a1a;transform:scaleX(1.0000);transform-origin:center;">Yes</div>
<div class="t" style="left:141.0px;top:740.00px;font-size:22.00px;font-weight:400;color:#1a1a1a;transform:scaleX(1.0000);transform-origin:left;">Branding &amp; Design Assets</div>
<div class="t" style="left:450.0px;top:740.00px;width:1200px;text-align:center;font-size:22.00px;font-weight:400;color:#1a1a1a;transform:scaleX(1.0000);transform-origin:center;">Feb-26</div>
<div class="t" style="left:656.0px;top:740.00px;width:1200px;text-align:center;font-size:22.00px;font-weight:400;color:#1a1a1a;transform:scaleX(1.0000);transform-origin:center;">Apr-26</div>
<div class="t" style="left:354.0px;top:740.00px;width:1200px;text-align:right;font-size:22.00px;font-weight:400;color:#1a1a1a;transform:scaleX(1.0100);transform-origin:right;">10,000</div>
<div class="t" style="left:1069.0px;top:740.00px;width:1200px;text-align:center;font-size:22.00px;font-weight:400;color:#1a1a1a;transform:scaleX(1.0000);transform-origin:center;">Yes</div>
<div class="t" style="left:141.0px;top:768.00px;font-size:22.00px;font-weight:400;color:#1a1a1a;transform:scaleX(1.0000);transform-origin:left;">Security &amp; Compliance Software</div>
<div class="t" style="left:450.0px;top:768.00px;width:1200px;text-align:center;font-size:22.00px;font-weight:400;color:#1a1a1a;transform:scaleX(1.0000);transform-origin:center;">Jul-26</div>
<div class="t" style="left:656.0px;top:768.00px;width:1200px;text-align:center;font-size:22.00px;font-weight:400;color:#1a1a1a;transform:scaleX(1.0000);transform-origin:center;">Sep-26</div>
<div class="t" style="left:354.0px;top:768.00px;width:1200px;text-align:right;font-size:22.00px;font-weight:400;color:#1a1a1a;transform:scaleX(1.0100);transform-origin:right;">8,000</div>
<div class="t" style="left:1069.0px;top:768.00px;width:1200px;text-align:center;font-size:22.00px;font-weight:400;color:#1a1a1a;transform:scaleX(1.0000);transform-origin:center;">Yes</div>
<div class="t" style="left:141.0px;top:796.00px;font-size:22.00px;font-weight:400;color:#1a1a1a;transform:scaleX(1.0000);transform-origin:left;">CRM &amp; Analytics System Integration</div>
<div class="t" style="left:450.0px;top:796.00px;width:1200px;text-align:center;font-size:22.00px;font-weight:400;color:#1a1a1a;transform:scaleX(1.0000);transform-origin:center;">Aug-26</div>
<div class="t" style="left:656.0px;top:796.00px;width:1200px;text-align:center;font-size:22.00px;font-weight:400;color:#1a1a1a;transform:scaleX(1.0000);transform-origin:center;">Oct-26</div>
<div class="t" style="left:354.0px;top:796.00px;width:1200px;text-align:right;font-size:22.00px;font-weight:400;color:#1a1a1a;transform:scaleX(1.0100);transform-origin:right;">12,000</div>
<div class="t" style="left:1069.0px;top:796.00px;width:1200px;text-align:center;font-size:22.00px;font-weight:400;color:#1a1a1a;transform:scaleX(1.0000);transform-origin:center;">Yes</div>
<div class="t" style="left:141.0px;top:824.00px;font-size:22.00px;font-weight:400;color:#1a1a1a;transform:scaleX(1.0000);transform-origin:left;">Initial Content Library Development</div>
<div class="t" style="left:450.0px;top:824.00px;width:1200px;text-align:center;font-size:22.00px;font-weight:400;color:#1a1a1a;transform:scaleX(1.0000);transform-origin:center;">Sep-26</div>
<div class="t" style="left:656.0px;top:824.00px;width:1200px;text-align:center;font-size:22.00px;font-weight:400;color:#1a1a1a;transform:scaleX(1.0000);transform-origin:center;">Dec-26</div>
<div class="t" style="left:354.0px;top:824.00px;width:1200px;text-align:right;font-size:22.00px;font-weight:400;color:#1a1a1a;transform:scaleX(1.0100);transform-origin:right;">7,000</div>
<div class="t" style="left:1069.0px;top:824.00px;width:1200px;text-align:center;font-size:22.00px;font-weight:400;color:#1a1a1a;transform:scaleX(1.0000);transform-origin:center;">Yes</div>
<div class="t" style="left:141.0px;top:852.00px;font-size:22.00px;font-weight:400;color:#1a1a1a;transform:scaleX(1.0000);transform-origin:left;">-</div>
<div class="t" style="left:1069.0px;top:852.00px;width:1200px;text-align:center;font-size:22.00px;font-weight:400;color:#1a1a1a;transform:scaleX(1.0000);transform-origin:center;">Yes</div>
<div class="t" style="left:141.0px;top:880.00px;font-size:22.00px;font-weight:400;color:#1a1a1a;transform:scaleX(1.0000);transform-origin:left;">-</div>
<div class="t" style="left:1069.0px;top:880.00px;width:1200px;text-align:center;font-size:22.00px;font-weight:400;color:#1a1a1a;transform:scaleX(1.0000);transform-origin:center;">Yes</div>
<div class="t" style="left:141.0px;top:908.00px;font-size:22.00px;font-weight:400;color:#1a1a1a;transform:scaleX(1.0000);transform-origin:left;">-</div>
<div class="t" style="left:1069.0px;top:908.00px;width:1200px;text-align:center;font-size:22.00px;font-weight:400;color:#1a1a1a;transform:scaleX(1.0000);transform-origin:center;">Yes</div>
<div class="t" style="left:141.0px;top:936.00px;font-size:22.00px;font-weight:400;color:#1a1a1a;transform:scaleX(1.0000);transform-origin:left;">-</div>
<div class="t" style="left:1069.0px;top:936.00px;width:1200px;text-align:center;font-size:22.00px;font-weight:400;color:#1a1a1a;transform:scaleX(1.0000);transform-origin:center;">Yes</div>
<div class="t" style="left:141.0px;top:964.00px;font-size:22.00px;font-weight:400;color:#1a1a1a;transform:scaleX(1.0000);transform-origin:left;">-</div>
<div class="t" style="left:1069.0px;top:964.00px;width:1200px;text-align:center;font-size:22.00px;font-weight:400;color:#1a1a1a;transform:scaleX(1.0000);transform-origin:center;">Yes</div>
<div class="t" style="left:141.0px;top:992.00px;font-size:22.00px;font-weight:400;color:#1a1a1a;transform:scaleX(1.0000);transform-origin:left;">-</div>
<div class="t" style="left:1069.0px;top:992.00px;width:1200px;text-align:center;font-size:22.00px;font-weight:400;color:#1a1a1a;transform:scaleX(1.0000);transform-origin:center;">Yes</div>
<div class="t" style="left:141.0px;top:1020.00px;font-size:22.00px;font-weight:400;color:#1a1a1a;transform:scaleX(1.0000);transform-origin:left;">-</div>
<div class="t" style="left:1069.0px;top:1020.00px;width:1200px;text-align:center;font-size:22.00px;font-weight:400;color:#1a1a1a;transform:scaleX(1.0000);transform-origin:center;">Yes</div>
<div class="t" style="left:141.0px;top:1048.00px;font-size:22.00px;font-weight:400;color:#1a1a1a;transform:scaleX(1.0000);transform-origin:left;">-</div>
<div class="t" style="left:1069.0px;top:1048.00px;width:1200px;text-align:center;font-size:22.00px;font-weight:400;color:#1a1a1a;transform:scaleX(1.0000);transform-origin:center;">Yes</div>
<div class="t" style="left:141.0px;top:1076.00px;font-size:22.00px;font-weight:400;color:#1a1a1a;transform:scaleX(1.0000);transform-origin:left;">-</div>
<div class="t" style="left:1069.0px;top:1076.00px;width:1200px;text-align:center;font-size:22.00px;font-weight:400;color:#1a1a1a;transform:scaleX(1.0000);transform-origin:center;">Yes</div>
<div class="t" style="left:141.0px;top:1104.00px;font-size:22.00px;font-weight:400;color:#1a1a1a;transform:scaleX(1.0000);transform-origin:left;">-</div>
<div class="t" style="left:1069.0px;top:1104.00px;width:1200px;text-align:center;font-size:22.00px;font-weight:400;color:#1a1a1a;transform:scaleX(1.0000);transform-origin:center;">Yes</div>
<div class="t" style="left:141.0px;top:1132.00px;font-size:22.00px;font-weight:400;color:#1a1a1a;transform:scaleX(1.0000);transform-origin:left;">-</div>
<div class="t" style="left:1069.0px;top:1132.00px;width:1200px;text-align:center;font-size:22.00px;font-weight:400;color:#1a1a1a;transform:scaleX(1.0000);transform-origin:center;">Yes</div>
<div class="t" style="left:141.0px;top:1160.00px;font-size:22.00px;font-weight:400;color:#1a1a1a;transform:scaleX(1.0000);transform-origin:left;">-</div>
<div class="t" style="left:1069.0px;top:1160.00px;width:1200px;text-align:center;font-size:22.00px;font-weight:400;color:#1a1a1a;transform:scaleX(1.0000);transform-origin:center;">Yes</div>
<div class="t" style="left:141.0px;top:1188.00px;font-size:22.00px;font-weight:400;color:#1a1a1a;transform:scaleX(1.0000);transform-origin:left;">-</div>
<div class="t" style="left:1069.0px;top:1188.00px;width:1200px;text-align:center;font-size:22.00px;font-weight:400;color:#1a1a1a;transform:scaleX(1.0000);transform-origin:center;">Yes</div>
<div class="t" style="left:730.0px;top:656.00px;width:1200px;text-align:right;font-size:22.00px;font-weight:400;color:#1a1a1a;transform:scaleX(1.0100);transform-origin:right;">25,000</div>
<div class="t" style="left:899.0px;top:656.00px;width:1200px;text-align:right;font-size:22.00px;font-weight:400;color:#1a1a1a;transform:scaleX(1.0100);transform-origin:right;">25,000</div>
<div class="t" style="left:1068.0px;top:656.00px;width:1200px;text-align:right;font-size:22.00px;font-weight:400;color:#1a1a1a;transform:scaleX(1.0100);transform-origin:right;">25,000</div>
<div class="t" style="left:1237.0px;top:656.00px;width:1200px;text-align:right;font-size:22.00px;font-weight:400;color:#1a1a1a;transform:scaleX(1.0100);transform-origin:right;">25,000</div>
<div class="t" style="left:1406.0px;top:656.00px;width:1200px;text-align:right;font-size:22.00px;font-weight:400;color:#1a1a1a;transform:scaleX(1.0100);transform-origin:right;">25,000</div>
<div class="t" style="left:1575.0px;top:656.00px;width:1200px;text-align:right;font-size:22.00px;font-weight:400;color:#1a1a1a;transform:scaleX(1.0100);transform-origin:right;">25,000</div>
<div class="t" style="left:1303.0px;top:684.00px;width:1200px;text-align:center;font-size:22.00px;font-weight:400;color:#1a1a1a;transform:scaleX(1.0000);transform-origin:center;">-</div>
<div class="t" style="left:1472.0px;top:684.00px;width:1200px;text-align:center;font-size:22.00px;font-weight:400;color:#1a1a1a;transform:scaleX(1.0000);transform-origin:center;">-</div>
<div class="t" style="left:1068.0px;top:684.00px;width:1200px;text-align:right;font-size:22.00px;font-weight:400;color:#1a1a1a;transform:scaleX(1.0100);transform-origin:right;">6,667</div>
<div class="t" style="left:1237.0px;top:684.00px;width:1200px;text-align:right;font-size:22.00px;font-weight:400;color:#1a1a1a;transform:scaleX(1.0100);transform-origin:right;">6,667</div>
<div class="t" style="left:1406.0px;top:684.00px;width:1200px;text-align:right;font-size:22.00px;font-weight:400;color:#1a1a1a;transform:scaleX(1.0100);transform-origin:right;">6,667</div>
<div class="t" style="left:2148.0px;top:684.00px;width:1200px;text-align:center;font-size:22.00px;font-weight:400;color:#1a1a1a;transform:scaleX(1.0000);transform-origin:center;">-</div>
<div class="t" style="left:730.0px;top:712.00px;width:1200px;text-align:right;font-size:22.00px;font-weight:400;color:#1a1a1a;transform:scaleX(1.0100);transform-origin:right;">5,000</div>
<div class="t" style="left:899.0px;top:712.00px;width:1200px;text-align:right;font-size:22.00px;font-weight:400;color:#1a1a1a;transform:scaleX(1.0100);transform-origin:right;">5,000</div>
<div class="t" style="left:1068.0px;top:712.00px;width:1200px;text-align:right;font-size:22.00px;font-weight:400;color:#1a1a1a;transform:scaleX(1.0100);transform-origin:right;">5,000</div>
<div class="t" style="left:1810.0px;top:712.00px;width:1200px;text-align:center;font-size:22.00px;font-weight:400;color:#1a1a1a;transform:scaleX(1.0000);transform-origin:center;">-</div>
<div class="t" style="left:1979.0px;top:712.00px;width:1200px;text-align:center;font-size:22.00px;font-weight:400;color:#1a1a1a;transform:scaleX(1.0000);transform-origin:center;">-</div>
<div class="t" style="left:2148.0px;top:712.00px;width:1200px;text-align:center;font-size:22.00px;font-weight:400;color:#1a1a1a;transform:scaleX(1.0000);transform-origin:center;">-</div>
<div class="t" style="left:1303.0px;top:740.00px;width:1200px;text-align:center;font-size:22.00px;font-weight:400;color:#1a1a1a;transform:scaleX(1.0000);transform-origin:center;">-</div>
<div class="t" style="left:899.0px;top:740.00px;width:1200px;text-align:right;font-size:22.00px;font-weight:400;color:#1a1a1a;transform:scaleX(1.0100);transform-origin:right;">3,333</div>
<div class="t" style="left:1068.0px;top:740.00px;width:1200px;text-align:right;font-size:22.00px;font-weight:400;color:#1a1a1a;transform:scaleX(1.0100);transform-origin:right;">3,333</div>
<div class="t" style="left:1237.0px;top:740.00px;width:1200px;text-align:right;font-size:22.00px;font-weight:400;color:#1a1a1a;transform:scaleX(1.0100);transform-origin:right;">3,333</div>
<div class="t" style="left:1979.0px;top:740.00px;width:1200px;text-align:center;font-size:22.00px;font-weight:400;color:#1a1a1a;transform:scaleX(1.0000);transform-origin:center;">-</div>
<div class="t" style="left:2148.0px;top:740.00px;width:1200px;text-align:center;font-size:22.00px;font-weight:400;color:#1a1a1a;transform:scaleX(1.0000);transform-origin:center;">-</div>
<div class="t" style="left:1303.0px;top:768.00px;width:1200px;text-align:center;font-size:22.00px;font-weight:400;color:#1a1a1a;transform:scaleX(1.0000);transform-origin:center;">-</div>
<div class="t" style="left:1472.0px;top:768.00px;width:1200px;text-align:center;font-size:22.00px;font-weight:400;color:#1a1a1a;transform:scaleX(1.0000);transform-origin:center;">-</div>
<div class="t" style="left:1641.0px;top:768.00px;width:1200px;text-align:center;font-size:22.00px;font-weight:400;color:#1a1a1a;transform:scaleX(1.0000);transform-origin:center;">-</div>
<div class="t" style="left:1810.0px;top:768.00px;width:1200px;text-align:center;font-size:22.00px;font-weight:400;color:#1a1a1a;transform:scaleX(1.0000);transform-origin:center;">-</div>
<div class="t" style="left:1979.0px;top:768.00px;width:1200px;text-align:center;font-size:22.00px;font-weight:400;color:#1a1a1a;transform:scaleX(1.0000);transform-origin:center;">-</div>
<div class="t" style="left:2148.0px;top:768.00px;width:1200px;text-align:center;font-size:22.00px;font-weight:400;color:#1a1a1a;transform:scaleX(1.0000);transform-origin:center;">-</div>
<div class="t" style="left:1303.0px;top:796.00px;width:1200px;text-align:center;font-size:22.00px;font-weight:400;color:#1a1a1a;transform:scaleX(1.0000);transform-origin:center;">-</div>
<div class="t" style="left:1472.0px;top:796.00px;width:1200px;text-align:center;font-size:22.00px;font-weight:400;color:#1a1a1a;transform:scaleX(1.0000);transform-origin:center;">-</div>
<div class="t" style="left:1641.0px;top:796.00px;width:1200px;text-align:center;font-size:22.00px;font-weight:400;color:#1a1a1a;transform:scaleX(1.0000);transform-origin:center;">-</div>
<div class="t" style="left:1810.0px;top:796.00px;width:1200px;text-align:center;font-size:22.00px;font-weight:400;color:#1a1a1a;transform:scaleX(1.0000);transform-origin:center;">-</div>
<div class="t" style="left:1979.0px;top:796.00px;width:1200px;text-align:center;font-size:22.00px;font-weight:400;color:#1a1a1a;transform:scaleX(1.0000);transform-origin:center;">-</div>
<div class="t" style="left:2148.0px;top:796.00px;width:1200px;text-align:center;font-size:22.00px;font-weight:400;color:#1a1a1a;transform:scaleX(1.0000);transform-origin:center;">-</div>
<div class="t" style="left:1303.0px;top:824.00px;width:1200px;text-align:center;font-size:22.00px;font-weight:400;color:#1a1a1a;transform:scaleX(1.0000);transform-origin:center;">-</div>
<div class="t" style="left:1472.0px;top:824.00px;width:1200px;text-align:center;font-size:22.00px;font-weight:400;color:#1a1a1a;transform:scaleX(1.0000);transform-origin:center;">-</div>
<div class="t" style="left:1641.0px;top:824.00px;width:1200px;text-align:center;font-size:22.00px;font-weight:400;color:#1a1a1a;transform:scaleX(1.0000);transform-origin:center;">-</div>
<div class="t" style="left:1810.0px;top:824.00px;width:1200px;text-align:center;font-size:22.00px;font-weight:400;color:#1a1a1a;transform:scaleX(1.0000);transform-origin:center;">-</div>
<div class="t" style="left:1979.0px;top:824.00px;width:1200px;text-align:center;font-size:22.00px;font-weight:400;color:#1a1a1a;transform:scaleX(1.0000);transform-origin:center;">-</div>
<div class="t" style="left:2148.0px;top:824.00px;width:1200px;text-align:center;font-size:22.00px;font-weight:400;color:#1a1a1a;transform:scaleX(1.0000);transform-origin:center;">-</div>
<div class="t" style="left:1303.0px;top:852.00px;width:1200px;text-align:center;font-size:22.00px;font-weight:400;color:#1a1a1a;transform:scaleX(1.0000);transform-origin:center;">-</div>
<div class="t" style="left:1472.0px;top:852.00px;width:1200px;text-align:center;font-size:22.00px;font-weight:400;color:#1a1a1a;transform:scaleX(1.0000);transform-origin:center;">-</div>
<div class="t" style="left:1641.0px;top:852.00px;width:1200px;text-align:center;font-size:22.00px;font-weight:400;color:#1a1a1a;transform:scaleX(1.0000);transform-origin:center;">-</div>
<div class="t" style="left:1810.0px;top:852.00px;width:1200px;text-align:center;font-size:22.00px;font-weight:400;color:#1a1a1a;transform:scaleX(1.0000);transform-origin:center;">-</div>
<div class="t" style="left:1979.0px;top:852.00px;width:1200px;text-align:center;font-size:22.00px;font-weight:400;color:#1a1a1a;transform:scaleX(1.0000);transform-origin:center;">-</div>
<div class="t" style="left:2148.0px;top:852.00px;width:1200px;text-align:center;font-size:22.00px;font-weight:400;color:#1a1a1a;transform:scaleX(1.0000);transform-origin:center;">-</div>
<div class="t" style="left:1303.0px;top:880.00px;width:1200px;text-align:center;font-size:22.00px;font-weight:400;color:#1a1a1a;transform:scaleX(1.0000);transform-origin:center;">-</div>
<div class="t" style="left:1472.0px;top:880.00px;width:1200px;text-align:center;font-size:22.00px;font-weight:400;color:#1a1a1a;transform:scaleX(1.0000);transform-origin:center;">-</div>
<div class="t" style="left:1641.0px;top:880.00px;width:1200px;text-align:center;font-size:22.00px;font-weight:400;color:#1a1a1a;transform:scaleX(1.0000);transform-origin:center;">-</div>
<div class="t" style="left:1810.0px;top:880.00px;width:1200px;text-align:center;font-size:22.00px;font-weight:400;color:#1a1a1a;transform:scaleX(1.0000);transform-origin:center;">-</div>
<div class="t" style="left:1979.0px;top:880.00px;width:1200px;text-align:center;font-size:22.00px;font-weight:400;color:#1a1a1a;transform:scaleX(1.0000);transform-origin:center;">-</div>
<div class="t" style="left:2148.0px;top:880.00px;width:1200px;text-align:center;font-size:22.00px;font-weight:400;color:#1a1a1a;transform:scaleX(1.0000);transform-origin:center;">-</div>
<div class="t" style="left:1303.0px;top:908.00px;width:1200px;text-align:center;font-size:22.00px;font-weight:400;color:#1a1a1a;transform:scaleX(1.0000);transform-origin:center;">-</div>
<div class="t" style="left:1472.0px;top:908.00px;width:1200px;text-align:center;font-size:22.00px;font-weight:400;color:#1a1a1a;transform:scaleX(1.0000);transform-origin:center;">-</div>
<div class="t" style="left:1641.0px;top:908.00px;width:1200px;text-align:center;font-size:22.00px;font-weight:400;color:#1a1a1a;transform:scaleX(1.0000);transform-origin:center;">-</div>
<div class="t" style="left:1810.0px;top:908.00px;width:1200px;text-align:center;font-size:22.00px;font-weight:400;color:#1a1a1a;transform:scaleX(1.0000);transform-origin:center;">-</div>
<div class="t" style="left:1979.0px;top:908.00px;width:1200px;text-align:center;font-size:22.00px;font-weight:400;color:#1a1a1a;transform:scaleX(1.0000);transform-origin:center;">-</div>
<div class="t" style="left:2148.0px;top:908.00px;width:1200px;text-align:center;font-size:22.00px;font-weight:400;color:#1a1a1a;transform:scaleX(1.0000);transform-origin:center;">-</div>
<div class="t" style="left:1303.0px;top:936.00px;width:1200px;text-align:center;font-size:22.00px;font-weight:400;color:#1a1a1a;transform:scaleX(1.0000);transform-origin:center;">-</div>
<div class="t" style="left:1472.0px;top:936.00px;width:1200px;text-align:center;font-size:22.00px;font-weight:400;color:#1a1a1a;transform:scaleX(1.0000);transform-origin:center;">-</div>
<div class="t" style="left:1641.0px;top:936.00px;width:1200px;text-align:center;font-size:22.00px;font-weight:400;color:#1a1a1a;transform:scaleX(1.0000);transform-origin:center;">-</div>
<div class="t" style="left:1810.0px;top:936.00px;width:1200px;text-align:center;font-size:22.00px;font-weight:400;color:#1a1a1a;transform:scaleX(1.0000);transform-origin:center;">-</div>
<div class="t" style="left:1979.0px;top:936.00px;width:1200px;text-align:center;font-size:22.00px;font-weight:400;color:#1a1a1a;transform:scaleX(1.0000);transform-origin:center;">-</div>
<div class="t" style="left:2148.0px;top:936.00px;width:1200px;text-align:center;font-size:22.00px;font-weight:400;color:#1a1a1a;transform:scaleX(1.0000);transform-origin:center;">-</div>
<div class="t" style="left:1303.0px;top:964.00px;width:1200px;text-align:center;font-size:22.00px;font-weight:400;color:#1a1a1a;transform:scaleX(1.0000);transform-origin:center;">-</div>
<div class="t" style="left:1472.0px;top:964.00px;width:1200px;text-align:center;font-size:22.00px;font-weight:400;color:#1a1a1a;transform:scaleX(1.0000);transform-origin:center;">-</div>
<div class="t" style="left:1641.0px;top:964.00px;width:1200px;text-align:center;font-size:22.00px;font-weight:400;color:#1a1a1a;transform:scaleX(1.0000);transform-origin:center;">-</div>
<div class="t" style="left:1810.0px;top:964.00px;width:1200px;text-align:center;font-size:22.00px;font-weight:400;color:#1a1a1a;transform:scaleX(1.0000);transform-origin:center;">-</div>
<div class="t" style="left:1979.0px;top:964.00px;width:1200px;text-align:center;font-size:22.00px;font-weight:400;color:#1a1a1a;transform:scaleX(1.0000);transform-origin:center;">-</div>
<div class="t" style="left:2148.0px;top:964.00px;width:1200px;text-align:center;font-size:22.00px;font-weight:400;color:#1a1a1a;transform:scaleX(1.0000);transform-origin:center;">-</div>
<div class="t" style="left:1303.0px;top:992.00px;width:1200px;text-align:center;font-size:22.00px;font-weight:400;color:#1a1a1a;transform:scaleX(1.0000);transform-origin:center;">-</div>
<div class="t" style="left:1472.0px;top:992.00px;width:1200px;text-align:center;font-size:22.00px;font-weight:400;color:#1a1a1a;transform:scaleX(1.0000);transform-origin:center;">-</div>
<div class="t" style="left:1641.0px;top:992.00px;width:1200px;text-align:center;font-size:22.00px;font-weight:400;color:#1a1a1a;transform:scaleX(1.0000);transform-origin:center;">-</div>
<div class="t" style="left:1810.0px;top:992.00px;width:1200px;text-align:center;font-size:22.00px;font-weight:400;color:#1a1a1a;transform:scaleX(1.0000);transform-origin:center;">-</div>
<div class="t" style="left:1979.0px;top:992.00px;width:1200px;text-align:center;font-size:22.00px;font-weight:400;color:#1a1a1a;transform:scaleX(1.0000);transform-origin:center;">-</div>
<div class="t" style="left:2148.0px;top:992.00px;width:1200px;text-align:center;font-size:22.00px;font-weight:400;color:#1a1a1a;transform:scaleX(1.0000);transform-origin:center;">-</div>
<div class="t" style="left:1303.0px;top:1020.00px;width:1200px;text-align:center;font-size:22.00px;font-weight:400;color:#1a1a1a;transform:scaleX(1.0000);transform-origin:center;">-</div>
<div class="t" style="left:1472.0px;top:1020.00px;width:1200px;text-align:center;font-size:22.00px;font-weight:400;color:#1a1a1a;transform:scaleX(1.0000);transform-origin:center;">-</div>
<div class="t" style="left:1641.0px;top:1020.00px;width:1200px;text-align:center;font-size:22.00px;font-weight:400;color:#1a1a1a;transform:scaleX(1.0000);transform-origin:center;">-</div>
<div class="t" style="left:1810.0px;top:1020.00px;width:1200px;text-align:center;font-size:22.00px;font-weight:400;color:#1a1a1a;transform:scaleX(1.0000);transform-origin:center;">-</div>
<div class="t" style="left:1979.0px;top:1020.00px;width:1200px;text-align:center;font-size:22.00px;font-weight:400;color:#1a1a1a;transform:scaleX(1.0000);transform-origin:center;">-</div>
<div class="t" style="left:2148.0px;top:1020.00px;width:1200px;text-align:center;font-size:22.00px;font-weight:400;color:#1a1a1a;transform:scaleX(1.0000);transform-origin:center;">-</div>
<div class="t" style="left:1303.0px;top:1048.00px;width:1200px;text-align:center;font-size:22.00px;font-weight:400;color:#1a1a1a;transform:scaleX(1.0000);transform-origin:center;">-</div>
<div class="t" style="left:1472.0px;top:1048.00px;width:1200px;text-align:center;font-size:22.00px;font-weight:400;color:#1a1a1a;transform:scaleX(1.0000);transform-origin:center;">-</div>
<div class="t" style="left:1641.0px;top:1048.00px;width:1200px;text-align:center;font-size:22.00px;font-weight:400;color:#1a1a1a;transform:scaleX(1.0000);transform-origin:center;">-</div>
<div class="t" style="left:1810.0px;top:1048.00px;width:1200px;text-align:center;font-size:22.00px;font-weight:400;color:#1a1a1a;transform:scaleX(1.0000);transform-origin:center;">-</div>
<div class="t" style="left:1979.0px;top:1048.00px;width:1200px;text-align:center;font-size:22.00px;font-weight:400;color:#1a1a1a;transform:scaleX(1.0000);transform-origin:center;">-</div>
<div class="t" style="left:2148.0px;top:1048.00px;width:1200px;text-align:center;font-size:22.00px;font-weight:400;color:#1a1a1a;transform:scaleX(1.0000);transform-origin:center;">-</div>
<div class="t" style="left:1303.0px;top:1076.00px;width:1200px;text-align:center;font-size:22.00px;font-weight:400;color:#1a1a1a;transform:scaleX(1.0000);transform-origin:center;">-</div>
<div class="t" style="left:1472.0px;top:1076.00px;width:1200px;text-align:center;font-size:22.00px;font-weight:400;color:#1a1a1a;transform:scaleX(1.0000);transform-origin:center;">-</div>
<div class="t" style="left:1641.0px;top:1076.00px;width:1200px;text-align:center;font-size:22.00px;font-weight:400;color:#1a1a1a;transform:scaleX(1.0000);transform-origin:center;">-</div>
<div class="t" style="left:1810.0px;top:1076.00px;width:1200px;text-align:center;font-size:22.00px;font-weight:400;color:#1a1a1a;transform:scaleX(1.0000);transform-origin:center;">-</div>
<div class="t" style="left:1979.0px;top:1076.00px;width:1200px;text-align:center;font-size:22.00px;font-weight:400;color:#1a1a1a;transform:scaleX(1.0000);transform-origin:center;">-</div>
<div class="t" style="left:2148.0px;top:1076.00px;width:1200px;text-align:center;font-size:22.00px;font-weight:400;color:#1a1a1a;transform:scaleX(1.0000);transform-origin:center;">-</div>
<div class="t" style="left:1303.0px;top:1104.00px;width:1200px;text-align:center;font-size:22.00px;font-weight:400;color:#1a1a1a;transform:scaleX(1.0000);transform-origin:center;">-</div>
<div class="t" style="left:1472.0px;top:1104.00px;width:1200px;text-align:center;font-size:22.00px;font-weight:400;color:#1a1a1a;transform:scaleX(1.0000);transform-origin:center;">-</div>
<div class="t" style="left:1641.0px;top:1104.00px;width:1200px;text-align:center;font-size:22.00px;font-weight:400;color:#1a1a1a;transform:scaleX(1.0000);transform-origin:center;">-</div>
<div class="t" style="left:1810.0px;top:1104.00px;width:1200px;text-align:center;font-size:22.00px;font-weight:400;color:#1a1a1a;transform:scaleX(1.0000);transform-origin:center;">-</div>
<div class="t" style="left:1979.0px;top:1104.00px;width:1200px;text-align:center;font-size:22.00px;font-weight:400;color:#1a1a1a;transform:scaleX(1.0000);transform-origin:center;">-</div>
<div class="t" style="left:2148.0px;top:1104.00px;width:1200px;text-align:center;font-size:22.00px;font-weight:400;color:#1a1a1a;transform:scaleX(1.0000);transform-origin:center;">-</div>
<div class="t" style="left:1303.0px;top:1132.00px;width:1200px;text-align:center;font-size:22.00px;font-weight:400;color:#1a1a1a;transform:scaleX(1.0000);transform-origin:center;">-</div>
<div class="t" style="left:1472.0px;top:1132.00px;width:1200px;text-align:center;font-size:22.00px;font-weight:400;color:#1a1a1a;transform:scaleX(1.0000);transform-origin:center;">-</div>
<div class="t" style="left:1641.0px;top:1132.00px;width:1200px;text-align:center;font-size:22.00px;font-weight:400;color:#1a1a1a;transform:scaleX(1.0000);transform-origin:center;">-</div>
<div class="t" style="left:1810.0px;top:1132.00px;width:1200px;text-align:center;font-size:22.00px;font-weight:400;color:#1a1a1a;transform:scaleX(1.0000);transform-origin:center;">-</div>
<div class="t" style="left:1979.0px;top:1132.00px;width:1200px;text-align:center;font-size:22.00px;font-weight:400;color:#1a1a1a;transform:scaleX(1.0000);transform-origin:center;">-</div>
<div class="t" style="left:2148.0px;top:1132.00px;width:1200px;text-align:center;font-size:22.00px;font-weight:400;color:#1a1a1a;transform:scaleX(1.0000);transform-origin:center;">-</div>
<div class="t" style="left:1303.0px;top:1160.00px;width:1200px;text-align:center;font-size:22.00px;font-weight:400;color:#1a1a1a;transform:scaleX(1.0000);transform-origin:center;">-</div>
<div class="t" style="left:1472.0px;top:1160.00px;width:1200px;text-align:center;font-size:22.00px;font-weight:400;color:#1a1a1a;transform:scaleX(1.0000);transform-origin:center;">-</div>
<div class="t" style="left:1641.0px;top:1160.00px;width:1200px;text-align:center;font-size:22.00px;font-weight:400;color:#1a1a1a;transform:scaleX(1.0000);transform-origin:center;">-</div>
<div class="t" style="left:1810.0px;top:1160.00px;width:1200px;text-align:center;font-size:22.00px;font-weight:400;color:#1a1a1a;transform:scaleX(1.0000);transform-origin:center;">-</div>
<div class="t" style="left:1979.0px;top:1160.00px;width:1200px;text-align:center;font-size:22.00px;font-weight:400;color:#1a1a1a;transform:scaleX(1.0000);transform-origin:center;">-</div>
<div class="t" style="left:2148.0px;top:1160.00px;width:1200px;text-align:center;font-size:22.00px;font-weight:400;color:#1a1a1a;transform:scaleX(1.0000);transform-origin:center;">-</div>
<div class="t" style="left:1303.0px;top:1188.00px;width:1200px;text-align:center;font-size:22.00px;font-weight:400;color:#1a1a1a;transform:scaleX(1.0000);transform-origin:center;">-</div>
<div class="t" style="left:1472.0px;top:1188.00px;width:1200px;text-align:center;font-size:22.00px;font-weight:400;color:#1a1a1a;transform:scaleX(1.0000);transform-origin:center;">-</div>
<div class="t" style="left:1641.0px;top:1188.00px;width:1200px;text-align:center;font-size:22.00px;font-weight:400;color:#1a1a1a;transform:scaleX(1.0000);transform-origin:center;">-</div>
<div class="t" style="left:1810.0px;top:1188.00px;width:1200px;text-align:center;font-size:22.00px;font-weight:400;color:#1a1a1a;transform:scaleX(1.0000);transform-origin:center;">-</div>
<div class="t" style="left:1979.0px;top:1188.00px;width:1200px;text-align:center;font-size:22.00px;font-weight:400;color:#1a1a1a;transform:scaleX(1.0000);transform-origin:center;">-</div>
<div class="t" style="left:2148.0px;top:1188.00px;width:1200px;text-align:center;font-size:22.00px;font-weight:400;color:#1a1a1a;transform:scaleX(1.0000);transform-origin:center;">-</div>
<div class="r" style="left:137.00px;top:1212.50px;width:2723.00px;height:35.00px;background:#49b2e6;"></div>
<div class="t" style="left:143.0px;top:1216.00px;font-size:29.00px;font-weight:700;color:#fff;transform:scaleX(1.0200);transform-origin:left;">Total</div>
<div class="t" style="left:354.0px;top:1220.00px;width:1200px;text-align:right;font-size:22.00px;font-weight:700;color:#fff;transform:scaleX(1.1150);transform-origin:right;">222,000</div>
<div class="t" style="left:727.0px;top:1220.00px;width:1200px;text-align:right;font-size:22.00px;font-weight:700;color:#fff;transform:scaleX(1.1150);transform-origin:right;">30,000</div>
<div class="t" style="left:896.0px;top:1220.00px;width:1200px;text-align:right;font-size:22.00px;font-weight:700;color:#fff;transform:scaleX(1.1150);transform-origin:right;">33,333</div>
<div class="t" style="left:1065.0px;top:1220.00px;width:1200px;text-align:right;font-size:22.00px;font-weight:700;color:#fff;transform:scaleX(1.1150);transform-origin:right;">40,000</div>
<div class="t" style="left:1234.0px;top:1220.00px;width:1200px;text-align:right;font-size:22.00px;font-weight:700;color:#fff;transform:scaleX(1.1150);transform-origin:right;">35,000</div>
<div class="t" style="left:1403.0px;top:1220.00px;width:1200px;text-align:right;font-size:22.00px;font-weight:700;color:#fff;transform:scaleX(1.1150);transform-origin:right;">31,667</div>
<div class="t" style="left:1572.0px;top:1220.00px;width:1200px;text-align:right;font-size:22.00px;font-weight:700;color:#fff;transform:scaleX(1.1150);transform-origin:right;">25,000</div>
<div class="t" style="left:95.0px;top:1306.00px;font-size:40.00px;font-weight:700;color:#222222;transform:scaleX(1.0220);transform-origin:left;">Startup Costs Depreciation, $</div>
<div class="r" style="left:137.00px;top:1373.40px;width:2723.00px;height:27.80px;background:#49b2e6;"></div>
<div class="t" style="left:143.0px;top:1378.00px;font-size:22.00px;font-weight:700;color:#fff;transform:scaleX(1.0450);transform-origin:left;">Opening Net Book Value</div>
<div class="t" style="left:1303.0px;top:1378.00px;width:1200px;text-align:center;font-size:22.00px;font-weight:700;color:#fff;transform:scaleX(1.0450);transform-origin:center;">-</div>
<div class="t" style="left:896.0px;top:1378.00px;width:1200px;text-align:right;font-size:22.00px;font-weight:700;color:#fff;transform:scaleX(1.1150);transform-origin:right;">29,750</div>
<div class="t" style="left:1065.0px;top:1378.00px;width:1200px;text-align:right;font-size:22.00px;font-weight:700;color:#fff;transform:scaleX(1.1150);transform-origin:right;">62,556</div>
<div class="t" style="left:1234.0px;top:1378.00px;width:1200px;text-align:right;font-size:22.00px;font-weight:700;color:#fff;transform:scaleX(1.1150);transform-origin:right;">101,694</div>
<div class="t" style="left:1403.0px;top:1378.00px;width:1200px;text-align:right;font-size:22.00px;font-weight:700;color:#fff;transform:scaleX(1.1150);transform-origin:right;">135,542</div>
<div class="t" style="left:1572.0px;top:1378.00px;width:1200px;text-align:right;font-size:22.00px;font-weight:700;color:#fff;transform:scaleX(1.1150);transform-origin:right;">165,792</div>
<div class="r" style="left:2787px;top:1373.4px;width:73px;height:28px;overflow:hidden"><div class="t" style="left:65px;top:4px;font-size:22px;font-weight:700;color:#fff;transform:scaleX(1.115);transform-origin:left">195,792</div></div>
<div class="t" style="left:163.0px;top:1405.00px;font-size:22.00px;font-weight:400;color:#1a1a1a;transform:scaleX(1.0000);transform-origin:left;">Expenditure - Amortizable</div>
<div class="t" style="left:1134.0px;top:1405.00px;width:1200px;text-align:center;font-size:22.00px;font-weight:400;color:#1a1a1a;transform:scaleX(1.0000);transform-origin:center;">-</div>
<div class="t" style="left:730.0px;top:1405.00px;width:1200px;text-align:right;font-size:22.00px;font-weight:400;color:#1a1a1a;transform:scaleX(1.0100);transform-origin:right;">30,000</div>
<div class="t" style="left:899.0px;top:1405.00px;width:1200px;text-align:right;font-size:22.00px;font-weight:400;color:#1a1a1a;transform:scaleX(1.0100);transform-origin:right;">33,333</div>
<div class="t" style="left:1068.0px;top:1405.00px;width:1200px;text-align:right;font-size:22.00px;font-weight:400;color:#1a1a1a;transform:scaleX(1.0100);transform-origin:right;">40,000</div>
<div class="t" style="left:1237.0px;top:1405.00px;width:1200px;text-align:right;font-size:22.00px;font-weight:400;color:#1a1a1a;transform:scaleX(1.0100);transform-origin:right;">35,000</div>
<div class="t" style="left:1406.0px;top:1405.00px;width:1200px;text-align:right;font-size:22.00px;font-weight:400;color:#1a1a1a;transform:scaleX(1.0100);transform-origin:right;">31,667</div>
<div class="t" style="left:1575.0px;top:1405.00px;width:1200px;text-align:right;font-size:22.00px;font-weight:400;color:#1a1a1a;transform:scaleX(1.0100);transform-origin:right;">25,000</div>
<div class="t" style="left:163.0px;top:1433.00px;font-size:22.00px;font-weight:400;color:#1a1a1a;transform:scaleX(1.0000);transform-origin:left;">Depreciation (Depreciation Period (Years) - 10)</div>
<div class="t" style="left:730.0px;top:1433.00px;width:1200px;text-align:right;font-size:22.00px;font-weight:400;color:#1a1a1a;transform:scaleX(1.0100);transform-origin:right;">250</div>
<div class="t" style="left:899.0px;top:1433.00px;width:1200px;text-align:right;font-size:22.00px;font-weight:400;color:#1a1a1a;transform:scaleX(1.0100);transform-origin:right;">528</div>
<div class="t" style="left:1068.0px;top:1433.00px;width:1200px;text-align:right;font-size:22.00px;font-weight:400;color:#1a1a1a;transform:scaleX(1.0100);transform-origin:right;">861</div>
<div class="t" style="left:1237.0px;top:1433.00px;width:1200px;text-align:right;font-size:22.00px;font-weight:400;color:#1a1a1a;transform:scaleX(1.0100);transform-origin:right;">1,153</div>
<div class="t" style="left:1406.0px;top:1433.00px;width:1200px;text-align:right;font-size:22.00px;font-weight:400;color:#1a1a1a;transform:scaleX(1.0100);transform-origin:right;">1,417</div>
<div class="t" style="left:1575.0px;top:1433.00px;width:1200px;text-align:right;font-size:22.00px;font-weight:400;color:#1a1a1a;transform:scaleX(1.0100);transform-origin:right;">1,625</div>
<div class="r" style="left:137.00px;top:1457.00px;width:2723.00px;height:29.00px;background:#49b2e6;"></div>
<div class="t" style="left:143.0px;top:1462.00px;font-size:22.00px;font-weight:700;color:#fff;transform:scaleX(1.0450);transform-origin:left;">Closing Net Book Value</div>
<div class="t" style="left:727.0px;top:1462.00px;width:1200px;text-align:right;font-size:22.00px;font-weight:700;color:#fff;transform:scaleX(1.1150);transform-origin:right;">29,750</div>
<div class="t" style="left:896.0px;top:1462.00px;width:1200px;text-align:right;font-size:22.00px;font-weight:700;color:#fff;transform:scaleX(1.1150);transform-origin:right;">62,556</div>
<div class="t" style="left:1065.0px;top:1462.00px;width:1200px;text-align:right;font-size:22.00px;font-weight:700;color:#fff;transform:scaleX(1.1150);transform-origin:right;">101,694</div>
<div class="t" style="left:1234.0px;top:1462.00px;width:1200px;text-align:right;font-size:22.00px;font-weight:700;color:#fff;transform:scaleX(1.1150);transform-origin:right;">135,542</div>
<div class="t" style="left:1403.0px;top:1462.00px;width:1200px;text-align:right;font-size:22.00px;font-weight:700;color:#fff;transform:scaleX(1.1150);transform-origin:right;">165,792</div>
<div class="t" style="left:1572.0px;top:1462.00px;width:1200px;text-align:right;font-size:22.00px;font-weight:700;color:#fff;transform:scaleX(1.1150);transform-origin:right;">189,167</div>
<div class="t" style="left:1127.0px;top:1462.00px;width:1200px;text-align:center;font-size:22.00px;font-weight:700;color:#fff;transform:scaleX(1.0450);transform-origin:center;">-</div>
<div class="r" style="left:2787px;top:1457.0px;width:73px;height:29px;overflow:hidden"><div class="t" style="left:65px;top:5px;font-size:22px;font-weight:700;color:#fff;transform:scaleX(1.115);transform-origin:left">195,542</div></div>
<div class="r" style="left:137.00px;top:1527.00px;width:2723.00px;height:28.00px;background:#49b2e6;"></div>
<div class="t" style="left:143.0px;top:1532.00px;font-size:22.00px;font-weight:700;color:#fff;transform:scaleX(1.0450);transform-origin:left;">Opening Net Book Value</div>
<div class="t" style="left:1303.0px;top:1532.00px;width:1200px;text-align:center;font-size:22.00px;font-weight:700;color:#fff;transform:scaleX(1.0450);transform-origin:center;">-</div>
<div class="t" style="left:1472.0px;top:1532.00px;width:1200px;text-align:center;font-size:22.00px;font-weight:700;color:#fff;transform:scaleX(1.0450);transform-origin:center;">-</div>
<div class="t" style="left:1641.0px;top:1532.00px;width:1200px;text-align:center;font-size:22.00px;font-weight:700;color:#fff;transform:scaleX(1.0450);transform-origin:center;">-</div>
<div class="t" style="left:1810.0px;top:1532.00px;width:1200px;text-align:center;font-size:22.00px;font-weight:700;color:#fff;transform:scaleX(1.0450);transform-origin:center;">-</div>
<div class="t" style="left:1979.0px;top:1532.00px;width:1200px;text-align:center;font-size:22.00px;font-weight:700;color:#fff;transform:scaleX(1.0450);transform-origin:center;">-</div>
<div class="t" style="left:2148.0px;top:1532.00px;width:1200px;text-align:center;font-size:22.00px;font-weight:700;color:#fff;transform:scaleX(1.0450);transform-origin:center;">-</div>
<div class="t" style="left:163.0px;top:1559.00px;font-size:22.00px;font-weight:400;color:#1a1a1a;transform:scaleX(1.0000);transform-origin:left;">Expenditure - Non-Amortizable</div>
<div class="t" style="left:1303.0px;top:1559.00px;width:1200px;text-align:center;font-size:22.00px;font-weight:400;color:#1a1a1a;transform:scaleX(1.0000);transform-origin:center;">-</div>
<div class="t" style="left:1472.0px;top:1559.00px;width:1200px;text-align:center;font-size:22.00px;font-weight:400;color:#1a1a1a;transform:scaleX(1.0000);transform-origin:center;">-</div>
<div class="t" style="left:1641.0px;top:1559.00px;width:1200px;text-align:center;font-size:22.00px;font-weight:400;color:#1a1a1a;transform:scaleX(1.0000);transform-origin:center;">-</div>
<div class="t" style="left:1810.0px;top:1559.00px;width:1200px;text-align:center;font-size:22.00px;font-weight:400;color:#1a1a1a;transform:scaleX(1.0000);transform-origin:center;">-</div>
<div class="t" style="left:1979.0px;top:1559.00px;width:1200px;text-align:center;font-size:22.00px;font-weight:400;color:#1a1a1a;transform:scaleX(1.0000);transform-origin:center;">-</div>
<div class="t" style="left:2148.0px;top:1559.00px;width:1200px;text-align:center;font-size:22.00px;font-weight:400;color:#1a1a1a;transform:scaleX(1.0000);transform-origin:center;">-</div>
<div class="r" style="left:137.00px;top:1583.00px;width:2723.00px;height:29.00px;background:#49b2e6;"></div>
<div class="t" style="left:143.0px;top:1588.00px;font-size:22.00px;font-weight:700;color:#fff;transform:scaleX(1.0450);transform-origin:left;">Closing Net Book Value</div>
<div class="t" style="left:1303.0px;top:1588.00px;width:1200px;text-align:center;font-size:22.00px;font-weight:700;color:#fff;transform:scaleX(1.0450);transform-origin:center;">-</div>
<div class="t" style="left:1472.0px;top:1588.00px;width:1200px;text-align:center;font-size:22.00px;font-weight:700;color:#fff;transform:scaleX(1.0450);transform-origin:center;">-</div>
<div class="t" style="left:1641.0px;top:1588.00px;width:1200px;text-align:center;font-size:22.00px;font-weight:700;color:#fff;transform:scaleX(1.0450);transform-origin:center;">-</div>
<div class="t" style="left:1810.0px;top:1588.00px;width:1200px;text-align:center;font-size:22.00px;font-weight:700;color:#fff;transform:scaleX(1.0450);transform-origin:center;">-</div>
<div class="t" style="left:1979.0px;top:1588.00px;width:1200px;text-align:center;font-size:22.00px;font-weight:700;color:#fff;transform:scaleX(1.0450);transform-origin:center;">-</div>
<div class="t" style="left:2148.0px;top:1588.00px;width:1200px;text-align:center;font-size:22.00px;font-weight:700;color:#fff;transform:scaleX(1.0450);transform-origin:center;">-</div>
<div class="r" style="left:1772.50px;top:305.00px;width:1.20px;height:1365.00px;background:#9a9a9a;"></div>
<div class="r" style="left:2860.00px;top:278.00px;width:31.00px;height:1392.00px;background:#0a0a0a;"></div>
<div class="r" style="left:2863.5px;top:279px;width:25px;height:1390px;border-radius:12px;background:#141414"></div>
<svg class="r" style="left:2866.0px;top:284.0px;" width="20" height="14" viewBox="0 0 20 14" fill="none"><path d="M4 11 L10 4 L16 11 Z" fill="#9a9a9a" stroke="#9a9a9a" stroke-width="2" stroke-linejoin="round"/></svg>
<div class="r" style="left:2870px;top:304px;width:12px;height:1310px;border-radius:6px;background:#a0a0a0"></div>
<svg class="r" style="left:2866.0px;top:1651.0px;" width="20" height="14" viewBox="0 0 20 14" fill="none"><path d="M4 3 L10 10 L16 3 Z" fill="#9a9a9a" stroke="#9a9a9a" stroke-width="2" stroke-linejoin="round"/></svg>
<div class="r" style="left:11.00px;top:1670.00px;width:2880.00px;height:48.00px;background:#0a0a0a;"></div>
<svg class="r" style="left:42.0px;top:1684.0px;" width="16" height="22" viewBox="0 0 16 22" fill="none"><path d="M12 2 L4 11 L12 20" stroke="#bdbdbd" stroke-width="1.7"/></svg>
<svg class="r" style="left:91.0px;top:1684.0px;" width="16" height="22" viewBox="0 0 16 22" fill="none"><path d="M4 2 L12 11 L4 20" stroke="#bdbdbd" stroke-width="1.7"/></svg>
<div class="t" style="left:-369.0px;top:1686.00px;width:1200px;text-align:center;font-size:20.00px;font-weight:400;color:#f0f0f0;">Contents</div>
<div class="r" style="left:292.00px;top:1683.00px;width:1.20px;height:22.00px;background:#4a4a4a;"></div>
<div class="r" style="left:299px;top:1676px;width:128px;height:35.5px;border-radius:7px;background:#ffee6e"></div>
<div class="t" style="left:-237.0px;top:1686.00px;width:1200px;text-align:center;font-size:20.00px;font-weight:400;color:#1a1a1a;">Dashboard</div>
<div class="r" style="left:433.00px;top:1683.00px;width:1.20px;height:22.00px;background:#4a4a4a;"></div>
<div class="r" style="left:440px;top:1676px;width:105px;height:35.5px;border-radius:7px;background:#ffee6e"></div>
<div class="t" style="left:-107.5px;top:1686.00px;width:1200px;text-align:center;font-size:20.00px;font-weight:400;color:#1a1a1a;">Revenue</div>
<div class="r" style="left:551.00px;top:1683.00px;width:1.20px;height:22.00px;background:#4a4a4a;"></div>
<div class="r" style="left:559px;top:1676px;width:157px;height:35.5px;border-radius:7px;background:#ffee6e"></div>
<div class="t" style="left:37.5px;top:1686.00px;width:1200px;text-align:center;font-size:20.00px;font-weight:400;color:#1a1a1a;">COGS &amp; OPEX</div>
<div class="r" style="left:722.00px;top:1683.00px;width:1.20px;height:22.00px;background:#4a4a4a;"></div>
<div class="r" style="left:730px;top:1676px;width:88px;height:35.5px;border-radius:7px;background:#ffee6e"></div>
<div class="t" style="left:174.0px;top:1686.00px;width:1200px;text-align:center;font-size:20.00px;font-weight:400;color:#1a1a1a;">Payroll</div>
<div class="r" style="left:824.00px;top:1683.00px;width:1.20px;height:22.00px;background:#4a4a4a;"></div>
<div class="r" style="left:932px;top:1676px;width:113px;height:35.5px;border-radius:7px;background:#ffee6e"></div>
<div class="t" style="left:388.5px;top:1686.00px;width:1200px;text-align:center;font-size:20.00px;font-weight:400;color:#1a1a1a;">CapTable</div>
<div class="r" style="left:1051.00px;top:1683.00px;width:1.20px;height:22.00px;background:#4a4a4a;"></div>
<div class="r" style="left:1058px;top:1676px;width:90px;height:35.5px;border-radius:7px;background:#ffee6e"></div>
<div class="t" style="left:503.0px;top:1686.00px;width:1200px;text-align:center;font-size:20.00px;font-weight:400;color:#1a1a1a;">Capital</div>
<div class="r" style="left:1154.00px;top:1683.00px;width:1.20px;height:22.00px;background:#4a4a4a;"></div>
<div class="r" style="left:1161px;top:1676px;width:42px;height:35.5px;border-radius:7px;background:#4db3e6"></div>
<div class="t" style="left:582.0px;top:1686.00px;width:1200px;text-align:center;font-size:20.00px;font-weight:400;color:#1a1a1a;">IS</div>
<div class="r" style="left:1209.00px;top:1683.00px;width:1.20px;height:22.00px;background:#4a4a4a;"></div>
<div class="r" style="left:1216px;top:1676px;width:48px;height:35.5px;border-radius:7px;background:#4db3e6"></div>
<div class="t" style="left:640.0px;top:1686.00px;width:1200px;text-align:center;font-size:20.00px;font-weight:400;color:#1a1a1a;">CF</div>
<div class="r" style="left:1270.00px;top:1683.00px;width:1.20px;height:22.00px;background:#4a4a4a;"></div>
<div class="r" style="left:1277px;top:1676px;width:48px;height:35.5px;border-radius:7px;background:#4db3e6"></div>
<div class="t" style="left:701.0px;top:1686.00px;width:1200px;text-align:center;font-size:20.00px;font-weight:400;color:#1a1a1a;">BS</div>
<div class="r" style="left:1331.00px;top:1683.00px;width:1.20px;height:22.00px;background:#4a4a4a;"></div>
<div class="r" style="left:1338px;top:1676px;width:115px;height:35.5px;border-radius:7px;background:#4db3e6"></div>
<div class="t" style="left:795.5px;top:1686.00px;width:1200px;text-align:center;font-size:20.00px;font-weight:400;color:#1a1a1a;">Scenarios</div>
<div class="r" style="left:1459.00px;top:1683.00px;width:1.20px;height:22.00px;background:#4a4a4a;"></div>
<div class="r" style="left:1466px;top:1676px;width:115px;height:35.5px;border-radius:7px;background:#4db3e6"></div>
<div class="t" style="left:923.5px;top:1686.00px;width:1200px;text-align:center;font-size:20.00px;font-weight:400;color:#1a1a1a;">Valuation</div>
<div class="r" style="left:1587.00px;top:1683.00px;width:1.20px;height:22.00px;background:#4a4a4a;"></div>
<div class="r" style="left:1594px;top:1676px;width:114px;height:35.5px;border-radius:7px;background:#4db3e6"></div>
<div class="t" style="left:1051.0px;top:1686.00px;width:1200px;text-align:center;font-size:20.00px;font-weight:400;color:#1a1a1a;">Summary</div>
<div class="r" style="left:1714.00px;top:1683.00px;width:1.20px;height:22.00px;background:#4a4a4a;"></div>
<div class="r" style="left:1721px;top:1676px;width:48px;height:35.5px;border-radius:7px;background:#4db3e6"></div>
<div class="t" style="left:1145.0px;top:1686.00px;width:1200px;text-align:center;font-size:20.00px;font-weight:400;color:#1a1a1a;">BE</div>
<div class="r" style="left:1775.00px;top:1683.00px;width:1.20px;height:22.00px;background:#4a4a4a;"></div>
<div class="r" style="left:1782px;top:1676px;width:72px;height:35.5px;border-radius:7px;background:#4db3e6"></div>
<div class="t" style="left:1218.0px;top:1686.00px;width:1200px;text-align:center;font-size:20.00px;font-weight:400;color:#1a1a1a;">ROIC</div>
<div class="r" style="left:1860.00px;top:1683.00px;width:1.20px;height:22.00px;background:#4a4a4a;"></div>
<div class="r" style="left:1867px;top:1676px;width:85px;height:35.5px;border-radius:7px;background:#4db3e6"></div>
<div class="t" style="left:1309.5px;top:1686.00px;width:1200px;text-align:center;font-size:20.00px;font-weight:400;color:#1a1a1a;">Charts</div>
<div class="r" style="left:1958.00px;top:1683.00px;width:1.20px;height:22.00px;background:#4a4a4a;"></div>
<div class="r" style="left:1965px;top:1676px;width:64px;height:35.5px;border-radius:7px;background:#4db3e6"></div>
<div class="t" style="left:1397.0px;top:1686.00px;width:1200px;text-align:center;font-size:20.00px;font-weight:400;color:#1a1a1a;">KPIs</div>
<div class="r" style="left:2035.00px;top:1683.00px;width:1.20px;height:22.00px;background:#4a4a4a;"></div>
<div class="r" style="left:2042px;top:1676px;width:40px;height:35.5px;border-radius:7px 0 0 7px;background:#4db3e6;overflow:hidden"></div>
<div class="r" style="left:2042px;top:1660px;width:30px;height:60px;overflow:hidden"><div class="t" style="left:8px;top:26.07px;font-size:20px;color:#1a1a1a">Sc</div></div>
<div class="r" style="left:2072.00px;top:1670.00px;width:143.00px;height:48.00px;background:#0a0a0a;"></div>
<div class="r" style="left:831.5px;top:1668px;width:88px;height:44px;border-radius:0 0 6px 6px;background:linear-gradient(#ffffff,#fffbe6 60%,#fff8d8)"></div>
<div class="r" style="left:821px;top:1670px;width:11px;height:12px;border-radius:0 6px 0 0;background:#0a0a0a"></div>
<div class="r" style="left:919px;top:1670px;width:11px;height:12px;border-radius:6px 0 0 0;background:#0a0a0a"></div>
<div class="t" style="left:276.0px;top:1680.00px;width:1200px;text-align:center;font-size:21.00px;font-weight:400;color:#202020;transform:scaleX(0.8800);transform-origin:center;">CAPEX</div>
<div class="r" style="left:844.00px;top:1705.00px;width:63.00px;height:3.00px;background:#1a7f3c;"></div>
<div class="r" style="left:2083.5px;top:1690px;width:5px;height:5px;border-radius:50%;background:#e0e0e0"></div>
<div class="r" style="left:2090.5px;top:1690px;width:5px;height:5px;border-radius:50%;background:#e0e0e0"></div>
<div class="r" style="left:2097.5px;top:1690px;width:5px;height:5px;border-radius:50%;background:#e0e0e0"></div>
<svg class="r" style="left:2133.0px;top:1683.0px;" width="20" height="20" viewBox="0 0 20 20" fill="none"><path d="M10 1 V19 M1 10 H19" stroke="#e8e8e8" stroke-width="1.7"/></svg>
<div class="r" style="left:2190.50px;top:1684.00px;width:3.00px;height:4.00px;background:#e0e0e0;"></div>
<div class="r" style="left:2190.50px;top:1692.00px;width:3.00px;height:4.00px;background:#e0e0e0;"></div>
<div class="r" style="left:2190.50px;top:1700.00px;width:3.00px;height:4.00px;background:#e0e0e0;"></div>
<div class="r" style="left:2216px;top:1680px;width:644px;height:26px;border-radius:13px;background:#141414"></div>
<svg class="r" style="left:2223.0px;top:1686.0px;" width="14" height="14" viewBox="0 0 14 14" fill="none"><path d="M11 1.5 V12.5 L3 7 Z" fill="#9a9a9a" stroke="#9a9a9a" stroke-width="1.5" stroke-linejoin="round"/></svg>
<div class="r" style="left:2241.5px;top:1687px;width:56px;height:12px;border-radius:6px;background:#a0a0a0"></div>
<svg class="r" style="left:2841.0px;top:1686.0px;" width="14" height="14" viewBox="0 0 14 14" fill="none"><path d="M3 1.5 V12.5 L11 7 Z" fill="#9a9a9a" stroke="#9a9a9a" stroke-width="1.5" stroke-linejoin="round"/></svg>
<div class="r" style="left:11.00px;top:1718.00px;width:2880.00px;height:1.20px;background:#2a2a2a;"></div>
<div class="r" style="left:11.00px;top:1719.20px;width:2880.00px;height:31.30px;background:#141414;"></div>
<div class="t" style="left:27.0px;top:1728.00px;font-size:17.00px;font-weight:400;color:#e8e8e8;transform:scaleX(0.8800);transform-origin:left;">Ready</div>
<svg class="r" style="left:98.0px;top:1725.0px;" width="23" height="21" viewBox="0 0 23 21" fill="none"><rect x="1" y="1" width="21" height="17" stroke="#e0e0e0" stroke-width="1.4" fill="none"/><path d="M1 5 H22 M4 9 H8 M4 12 H8 M4 15 H8" stroke="#e0e0e0" stroke-width="1.3"/><circle cx="15" cy="13.5" r="5.5" fill="#141414" stroke="#e0e0e0" stroke-width="1.5"/><circle cx="15" cy="13.5" r="2.5" fill="#e0e0e0"/></svg>
<svg class="r" style="left:146.0px;top:1724.0px;" width="22" height="23" viewBox="0 0 22 23" fill="none"><circle cx="9" cy="3" r="2.3" stroke="#e0e0e0" stroke-width="1.4" fill="none"/><path d="M2 6 L9 8 L16 6 M9 8 V13 L5 21 M9 13 L10 15" stroke="#e0e0e0" stroke-width="1.4" fill="none"/><path d="M12 15 L20 22 M20 15 L12 22" stroke="#e0e0e0" stroke-width="1.4"/></svg>
<div class="t" style="left:173.0px;top:1728.00px;font-size:17.00px;font-weight:700;color:#f0f0f0;transform:scaleX(0.9200);transform-origin:left;">Accessibility: Investigate</div>
<div class="r" style="left:2444.50px;top:1719.20px;width:60.50px;height:31.30px;background:#262626;"></div>
<svg class="r" style="left:2463.0px;top:1723.0px;" width="22" height="22" viewBox="0 0 22 22" fill="none"><rect x="1" y="1" width="20" height="20" stroke="#f0f0f0" stroke-width="1.6" fill="none"/><path d="M7.7 1 V21 M14.3 1 V21 M1 7.7 H21 M1 14.3 H21" stroke="#f0f0f0" stroke-width="1.6"/></svg>
<svg class="r" style="left:2523.0px;top:1723.0px;" width="23" height="22" viewBox="0 0 23 22" fill="none"><rect x="1" y="1" width="21" height="20" stroke="#f0f0f0" stroke-width="1.6" fill="none"/><rect x="5" y="4.5" width="13" height="13" stroke="#f0f0f0" stroke-width="1.4" fill="none"/><path d="M8 8 H15 M8 11 H15 M8 14 H15" stroke="#f0f0f0" stroke-width="1.3"/></svg>
<svg class="r" style="left:2583.0px;top:1723.0px;" width="23" height="22" viewBox="0 0 23 22" fill="none"><rect x="1" y="1" width="21" height="20" stroke="#f0f0f0" stroke-width="1.6" fill="none"/><path d="M1 10 H12 V1 M8 1 V7" stroke="#f0f0f0" stroke-width="1.6" fill="none"/></svg>
<div class="r" style="left:2632.00px;top:1734.00px;width:13.00px;height:1.20px;background:#d8d8d8;"></div>
<div class="r" style="left:2653.00px;top:1734.00px;width:147.00px;height:2.00px;background:#a8a8a8;"></div>
<div class="r" style="left:2726.50px;top:1730.00px;width:1.20px;height:9.00px;background:#d0d0d0;"></div>
<div class="r" style="left:2733.00px;top:1726.50px;width:7.00px;height:16.50px;background:#b0b0b0;"></div>
<svg class="r" style="left:2808.0px;top:1727.0px;" width="15" height="15" viewBox="0 0 15 15" fill="none"><path d="M7.5 1 V14 M1 7.5 H14" stroke="#e0e0e0" stroke-width="1.4"/></svg>
<div class="t" style="left:1679.0px;top:1728.00px;width:1200px;text-align:right;font-size:17.50px;font-weight:400;color:#e8e8e8;transform:scaleX(0.8800);transform-origin:right;">140%</div>
</body></html>
